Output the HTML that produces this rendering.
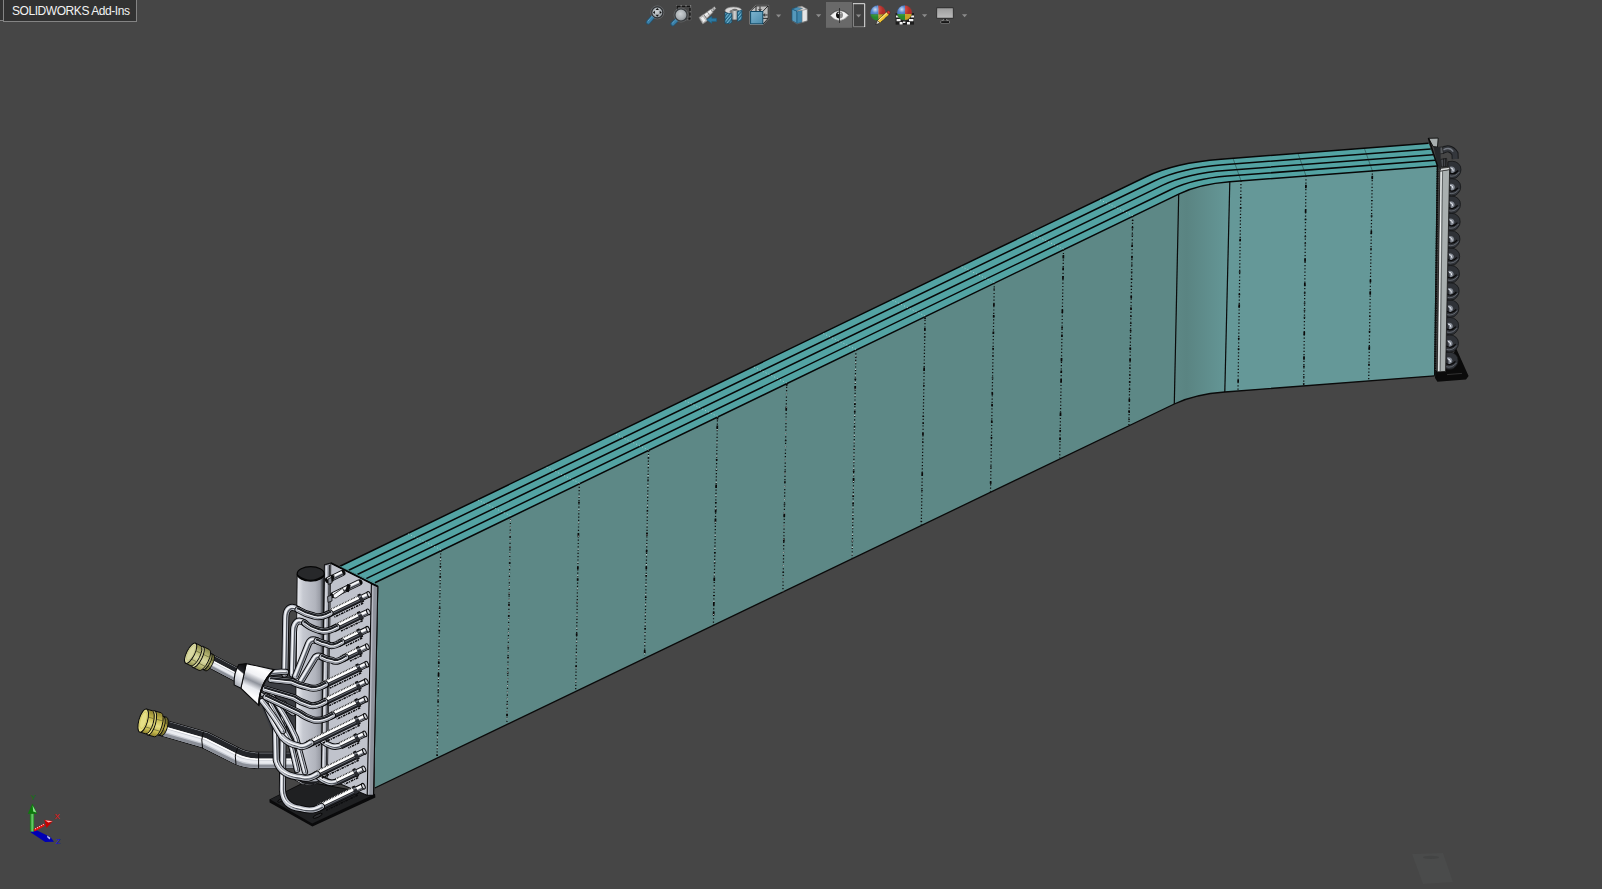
<!DOCTYPE html>
<html lang="en"><head><meta charset="utf-8"><title>SOLIDWORKS</title>
<style>
html,body{margin:0;padding:0;background:#464646;overflow:hidden}
body{width:1602px;height:889px;position:relative;font-family:"Liberation Sans","DejaVu Sans",sans-serif}
#tab{position:absolute;left:3px;top:-1px;width:132px;height:21px;background:#323232;border:1px solid #848484;box-sizing:content-box;color:#f2f2f2;font-size:12px;line-height:22px;white-space:nowrap}
#tab span{position:absolute;left:8px;top:0;letter-spacing:-0.44px}
#lefttab{position:absolute;left:0;top:0;width:3px;height:20px;background:#323232;border-bottom:1px solid #848484}
#scene{position:absolute;left:0;top:0;width:1602px;height:889px}
</style></head><body>
<svg id="scene" width="1602" height="889" viewBox="0 0 1602 889">
<defs>
<linearGradient id="bendg" x1="0" x2="1" y1="0" y2="0"><stop offset="0" stop-color="#5d8886"/><stop offset="0.22" stop-color="#5a8482"/><stop offset="1" stop-color="#659898"/></linearGradient>
</defs>
<path d="M374.9,582.7 L1178.7,194.1 L1174.3,404 L374.8,788 Z" fill="#5d8886"/>
<path d="M1178.7,194.1 Q1199.3,184.1 1229.8,181.8 L1224.8,392 Q1194.4,394.3 1174.3,404 Z" fill="url(#bendg)"/>
<path d="M1229.8,181.8 L1437.4,166 L1434.6,375.8 L1224.8,392 Z" fill="#659898"/>
<path d="M340 566.2 L1146 176.7 Q1174.9 162.7 1221 159.2 L1428.6 143.3 L1437.4 166 L1229.8 181.8 Q1199.3 184.1 1178.7 194.1 L374.9 582.7 Z" fill="#53a3a3"/>
<path d="M340 566.2 L1146 176.7 Q1174.9 162.7 1221 159.2 L1428.6 143.3" fill="none" stroke="#070707" stroke-width="1.5"/>
<path d="M348.7 570.3 L1154.2 181 Q1181 168.1 1223.2 164.8 L1430.8 149" fill="none" stroke="#070707" stroke-width="1.5"/>
<path d="M357.4 574.5 L1162.3 185.4 Q1187.1 173.4 1225.4 170.5 L1433 154.7" fill="none" stroke="#070707" stroke-width="1.5"/>
<path d="M366.2 578.6 L1170.5 189.8 Q1193.2 178.8 1227.6 176.1 L1435.2 160.3" fill="none" stroke="#070707" stroke-width="1.5"/>
<path d="M374.9 582.7 L1178.7 194.1 Q1199.3 184.1 1229.8 181.8 L1437.4 166" fill="none" stroke="#070707" stroke-width="1.5"/>
<path d="M374.8 788 L1174.3 404 Q1194.4 394.3 1224.8 392 L1434.6 375.8" fill="none" stroke="#0a0a0a" stroke-width="1.3"/>
<path d="M1178.7,194.1 L1174.3,404" stroke="#0a0a0a" stroke-width="1.2"/>
<path d="M1229.8,181.8 L1224.8,392" stroke="#0a0a0a" stroke-width="1.2"/>
<path d="M1437.4,166 L1434.6,375.8" stroke="#0a0a0a" stroke-width="1.2"/>
<path d="M340,566.2 L374.9,582.7 L374.9,584.9 L339,568.2 Z" fill="#53a3a3"/>
<path d="M440.7 550.1 L437.1 757" stroke="#0e0e0e" stroke-width="1.25" stroke-dasharray="1.2 2.1" fill="none"/>
<path d="M440.7 550.1 L437.1 757" stroke="#0a0a0a" stroke-width="1.7" stroke-dasharray="3.5 14 1 9 1.5 30 1.5 21 1.5 30 2.5 9" stroke-dashoffset="1.7" fill="none"/>
<path d="M440.7 550.1 L437.1 757" stroke="#e8eaea" stroke-width="1" stroke-dasharray="1 8.9" stroke-dashoffset="0.7" fill="none" opacity="0.8"/>
<path d="M440.7 549.6 l-33.5 -16.2" stroke="#cfe0df" stroke-width="0.9" stroke-dasharray="1 2.2" fill="none" opacity="0.75"/>
<path d="M510.5 516.3 L506.9 724.2" stroke="#0e0e0e" stroke-width="1.25" stroke-dasharray="1.2 2.1" fill="none"/>
<path d="M510.5 516.3 L506.9 724.2" stroke="#0a0a0a" stroke-width="1.7" stroke-dasharray="1.5 30 1 9 1.5 14 1.5 30 1 9 2.5 9" stroke-dashoffset="11.1" fill="none"/>
<path d="M510.5 516.3 L506.9 724.2" stroke="#e8eaea" stroke-width="1" stroke-dasharray="1 5.6" stroke-dashoffset="2.9" fill="none" opacity="0.8"/>
<path d="M510.5 515.8 l-33.5 -16.2" stroke="#cfe0df" stroke-width="0.9" stroke-dasharray="1 2.2" fill="none" opacity="0.75"/>
<path d="M579.3 483.5 L575.7 690.5" stroke="#0e0e0e" stroke-width="1.25" stroke-dasharray="1.2 2.1" fill="none"/>
<path d="M579.3 483.5 L575.7 690.5" stroke="#0a0a0a" stroke-width="1.7" stroke-dasharray="2.5 30 1.5 30 3.5 30 2.5 9 2.5 21 1.5 30" stroke-dashoffset="14.2" fill="none"/>
<path d="M579.3 483.5 L575.7 690.5" stroke="#e8eaea" stroke-width="1" stroke-dasharray="1 12.2" stroke-dashoffset="0.6" fill="none" opacity="0.8"/>
<path d="M579.3 483 l-33.5 -16.2" stroke="#cfe0df" stroke-width="0.9" stroke-dasharray="1 2.2" fill="none" opacity="0.75"/>
<path d="M648.6 450.6 L644.6 655.4" stroke="#0e0e0e" stroke-width="1.25" stroke-dasharray="1.2 2.1" fill="none"/>
<path d="M648.6 450.6 L644.6 655.4" stroke="#0a0a0a" stroke-width="1.7" stroke-dasharray="2.5 6 1 21 1 30 1 21 3.5 14 2.5 14" stroke-dashoffset="1.6" fill="none"/>
<path d="M648.6 450.6 L644.6 655.4" stroke="#e8eaea" stroke-width="1" stroke-dasharray="1 8.9" stroke-dashoffset="5.3" fill="none" opacity="0.8"/>
<path d="M648.6 450.1 l-33.5 -16.2" stroke="#cfe0df" stroke-width="0.9" stroke-dasharray="1 2.2" fill="none" opacity="0.75"/>
<path d="M717.5 416.9 L713.4 625.2" stroke="#0e0e0e" stroke-width="1.25" stroke-dasharray="1.2 2.1" fill="none"/>
<path d="M717.5 416.9 L713.4 625.2" stroke="#0a0a0a" stroke-width="1.7" stroke-dasharray="3.5 6 3.5 30 1.5 9 1 14 3.5 14 1 6" stroke-dashoffset="0.8" fill="none"/>
<path d="M717.5 416.9 L713.4 625.2" stroke="#e8eaea" stroke-width="1" stroke-dasharray="1 12.2" stroke-dashoffset="0.8" fill="none" opacity="0.8"/>
<path d="M717.5 416.4 l-33.5 -16.2" stroke="#cfe0df" stroke-width="0.9" stroke-dasharray="1 2.2" fill="none" opacity="0.75"/>
<path d="M786.7 383.4 L782.9 591.8" stroke="#0e0e0e" stroke-width="1.25" stroke-dasharray="1.2 2.1" fill="none"/>
<path d="M786.7 383.4 L782.9 591.8" stroke="#0a0a0a" stroke-width="1.7" stroke-dasharray="3.5 21 3.5 30 1 30 1 9 1.5 21 1 9" stroke-dashoffset="1.2" fill="none"/>
<path d="M786.7 383.4 L782.9 591.8" stroke="#e8eaea" stroke-width="1" stroke-dasharray="1 12.2" stroke-dashoffset="3.1" fill="none" opacity="0.8"/>
<path d="M786.7 382.9 l-33.5 -16.2" stroke="#cfe0df" stroke-width="0.9" stroke-dasharray="1 2.2" fill="none" opacity="0.75"/>
<path d="M855.9 349.9 L852.1 558.5" stroke="#0e0e0e" stroke-width="1.25" stroke-dasharray="1.2 2.1" fill="none"/>
<path d="M855.9 349.9 L852.1 558.5" stroke="#0a0a0a" stroke-width="1.7" stroke-dasharray="1 21 1 21 1.5 6 3.5 14 1.5 6 1.5 14" stroke-dashoffset="15.4" fill="none"/>
<path d="M855.9 349.9 L852.1 558.5" stroke="#e8eaea" stroke-width="1" stroke-dasharray="1 5.6" stroke-dashoffset="7.4" fill="none" opacity="0.8"/>
<path d="M855.9 349.4 l-33.5 -16.2" stroke="#cfe0df" stroke-width="0.9" stroke-dasharray="1 2.2" fill="none" opacity="0.75"/>
<path d="M925.1 316.5 L921.3 525.1" stroke="#0e0e0e" stroke-width="1.25" stroke-dasharray="1.2 2.1" fill="none"/>
<path d="M925.1 316.5 L921.3 525.1" stroke="#0a0a0a" stroke-width="1.7" stroke-dasharray="1 6 1 9 2.5 6 1 30 3.5 14 1 30" stroke-dashoffset="5.6" fill="none"/>
<path d="M925.1 316 l-33.5 -16.2" stroke="#cfe0df" stroke-width="0.9" stroke-dasharray="1 2.2" fill="none" opacity="0.75"/>
<path d="M994.3 283 L990.5 491.7" stroke="#0e0e0e" stroke-width="1.25" stroke-dasharray="1.2 2.1" fill="none"/>
<path d="M994.3 283 L990.5 491.7" stroke="#0a0a0a" stroke-width="1.7" stroke-dasharray="1 21 1 14 2.5 9 2.5 14 2.5 14 1.5 6" stroke-dashoffset="16.6" fill="none"/>
<path d="M994.3 282.5 l-33.5 -16.2" stroke="#cfe0df" stroke-width="0.9" stroke-dasharray="1 2.2" fill="none" opacity="0.75"/>
<path d="M1063.5 249.6 L1059.7 458.3" stroke="#0e0e0e" stroke-width="1.25" stroke-dasharray="1.2 2.1" fill="none"/>
<path d="M1063.5 249.6 L1059.7 458.3" stroke="#0a0a0a" stroke-width="1.7" stroke-dasharray="2.5 21 3.5 9 2.5 6 3.5 30 3.5 14 1.5 6" stroke-dashoffset="18" fill="none"/>
<path d="M1063.5 249.1 l-33.5 -16.2" stroke="#cfe0df" stroke-width="0.9" stroke-dasharray="1 2.2" fill="none" opacity="0.75"/>
<path d="M1132.7 216.1 L1128.9 424.9" stroke="#0e0e0e" stroke-width="1.25" stroke-dasharray="1.2 2.1" fill="none"/>
<path d="M1132.7 216.1 L1128.9 424.9" stroke="#0a0a0a" stroke-width="1.7" stroke-dasharray="1 6 1 6 1.5 6 1 9 2.5 9 2.5 6" stroke-dashoffset="3.2" fill="none"/>
<path d="M1132.7 215.6 l-33.5 -16.2" stroke="#cfe0df" stroke-width="0.9" stroke-dasharray="1 2.2" fill="none" opacity="0.75"/>
<path d="M1241 180.7 L1238 390.2" stroke="#0e0e0e" stroke-width="1.25" stroke-dasharray="1.2 2.1" fill="none"/>
<path d="M1241 180.7 L1238 390.2" stroke="#0a0a0a" stroke-width="1.7" stroke-dasharray="3.5 30 1.5 9 1.5 30 2.5 30 1.5 21 1.5 9" stroke-dashoffset="17.5" fill="none"/>
<path d="M1306 175.9 L1303.7 385.5" stroke="#0e0e0e" stroke-width="1.25" stroke-dasharray="1.2 2.1" fill="none"/>
<path d="M1306 175.9 L1303.7 385.5" stroke="#0a0a0a" stroke-width="1.7" stroke-dasharray="1 14 3.5 21 3.5 6 1.5 9 1 6 1 6" stroke-dashoffset="6.2" fill="none"/>
<path d="M1372.4 170.2 L1368.7 380.6" stroke="#0e0e0e" stroke-width="1.25" stroke-dasharray="1.2 2.1" fill="none"/>
<path d="M1372.4 170.2 L1368.7 380.6" stroke="#0a0a0a" stroke-width="1.7" stroke-dasharray="2.5 9 3.5 21 1 14 1.5 14 3.5 14 1.5 30" stroke-dashoffset="6" fill="none"/>
<path d="M1241 180.7 l-8 -22.4" stroke="#111" stroke-width="0.8" fill="none" opacity="0.45"/>
<path d="M1306 175.9 l-8 -22.4" stroke="#111" stroke-width="0.8" fill="none" opacity="0.45"/>
<path d="M1372.4 170.9 l-8 -22.4" stroke="#111" stroke-width="0.8" fill="none" opacity="0.45"/>
<path d="M1412 854 L1443 853 L1453 882 L1423 884 Z" fill="#4b4c4c" opacity="0.8"/>
<ellipse cx="1431" cy="857.4" rx="8" ry="1.6" fill="#434444"/>
<path d="M1435.4 371 L1447 368 L1456 348 L1468.6 376 L1466 379.4 L1437.4 381.8 L1435 378 Z" fill="#0b0b0b"/>
<path d="M1447 374.6 L1462 373.4" stroke="#3a3a3a" stroke-width="0.8"/>
<g transform="translate(1450.2 360.2)">
<path d="M-5 -7.6 Q4 -9.6 7.4 -3 Q9.6 4 3 8.6 Q-1 10 -5.4 8.4 Z" fill="#2f3237" stroke="#141517" stroke-width="0.8"/>
<path d="M-3.4 -2.6 Q1.2 -3.8 2.2 0.4 Q2 3.8 -2.4 4.8 Q-0.6 1.4 -3.4 -2.6Z" fill="#7f858f"/>
<path d="M-2.6 -1.4 Q0.4 -1.4 0.2 1.8" stroke="#e6e9ef" stroke-width="1" fill="none"/>
<path d="M-4.4 3.2 Q1 6.4 5.2 1.2" stroke="#0a0a0b" stroke-width="1.2" fill="none"/>
<path d="M-4.6 6.4 Q2 8.4 6.4 2.6" stroke="#9aa0aa" stroke-width="0.6" fill="none" opacity="0.8"/>
</g>
<g transform="translate(1450.5 342.9)">
<path d="M-5 -7.6 Q4 -9.6 7.4 -3 Q9.6 4 3 8.6 Q-1 10 -5.4 8.4 Z" fill="#2f3237" stroke="#141517" stroke-width="0.8"/>
<path d="M-3.4 -2.6 Q1.2 -3.8 2.2 0.4 Q2 3.8 -2.4 4.8 Q-0.6 1.4 -3.4 -2.6Z" fill="#7f858f"/>
<path d="M-2.6 -1.4 Q0.4 -1.4 0.2 1.8" stroke="#e6e9ef" stroke-width="1" fill="none"/>
<path d="M-4.4 3.2 Q1 6.4 5.2 1.2" stroke="#0a0a0b" stroke-width="1.2" fill="none"/>
<path d="M-4.6 6.4 Q2 8.4 6.4 2.6" stroke="#9aa0aa" stroke-width="0.6" fill="none" opacity="0.8"/>
</g>
<g transform="translate(1450.7 325.5)">
<path d="M-5 -7.6 Q4 -9.6 7.4 -3 Q9.6 4 3 8.6 Q-1 10 -5.4 8.4 Z" fill="#2f3237" stroke="#141517" stroke-width="0.8"/>
<path d="M-3.4 -2.6 Q1.2 -3.8 2.2 0.4 Q2 3.8 -2.4 4.8 Q-0.6 1.4 -3.4 -2.6Z" fill="#7f858f"/>
<path d="M-2.6 -1.4 Q0.4 -1.4 0.2 1.8" stroke="#e6e9ef" stroke-width="1" fill="none"/>
<path d="M-4.4 3.2 Q1 6.4 5.2 1.2" stroke="#0a0a0b" stroke-width="1.2" fill="none"/>
<path d="M-4.6 6.4 Q2 8.4 6.4 2.6" stroke="#9aa0aa" stroke-width="0.6" fill="none" opacity="0.8"/>
</g>
<g transform="translate(1451 308.1)">
<path d="M-5 -7.6 Q4 -9.6 7.4 -3 Q9.6 4 3 8.6 Q-1 10 -5.4 8.4 Z" fill="#2f3237" stroke="#141517" stroke-width="0.8"/>
<path d="M-3.4 -2.6 Q1.2 -3.8 2.2 0.4 Q2 3.8 -2.4 4.8 Q-0.6 1.4 -3.4 -2.6Z" fill="#7f858f"/>
<path d="M-2.6 -1.4 Q0.4 -1.4 0.2 1.8" stroke="#e6e9ef" stroke-width="1" fill="none"/>
<path d="M-4.4 3.2 Q1 6.4 5.2 1.2" stroke="#0a0a0b" stroke-width="1.2" fill="none"/>
<path d="M-4.6 6.4 Q2 8.4 6.4 2.6" stroke="#9aa0aa" stroke-width="0.6" fill="none" opacity="0.8"/>
</g>
<g transform="translate(1451.2 290.8)">
<path d="M-5 -7.6 Q4 -9.6 7.4 -3 Q9.6 4 3 8.6 Q-1 10 -5.4 8.4 Z" fill="#2f3237" stroke="#141517" stroke-width="0.8"/>
<path d="M-3.4 -2.6 Q1.2 -3.8 2.2 0.4 Q2 3.8 -2.4 4.8 Q-0.6 1.4 -3.4 -2.6Z" fill="#7f858f"/>
<path d="M-2.6 -1.4 Q0.4 -1.4 0.2 1.8" stroke="#e6e9ef" stroke-width="1" fill="none"/>
<path d="M-4.4 3.2 Q1 6.4 5.2 1.2" stroke="#0a0a0b" stroke-width="1.2" fill="none"/>
<path d="M-4.6 6.4 Q2 8.4 6.4 2.6" stroke="#9aa0aa" stroke-width="0.6" fill="none" opacity="0.8"/>
</g>
<g transform="translate(1451.5 273.5)">
<path d="M-5 -7.6 Q4 -9.6 7.4 -3 Q9.6 4 3 8.6 Q-1 10 -5.4 8.4 Z" fill="#2f3237" stroke="#141517" stroke-width="0.8"/>
<path d="M-3.4 -2.6 Q1.2 -3.8 2.2 0.4 Q2 3.8 -2.4 4.8 Q-0.6 1.4 -3.4 -2.6Z" fill="#7f858f"/>
<path d="M-2.6 -1.4 Q0.4 -1.4 0.2 1.8" stroke="#e6e9ef" stroke-width="1" fill="none"/>
<path d="M-4.4 3.2 Q1 6.4 5.2 1.2" stroke="#0a0a0b" stroke-width="1.2" fill="none"/>
<path d="M-4.6 6.4 Q2 8.4 6.4 2.6" stroke="#9aa0aa" stroke-width="0.6" fill="none" opacity="0.8"/>
</g>
<g transform="translate(1451.7 256.1)">
<path d="M-5 -7.6 Q4 -9.6 7.4 -3 Q9.6 4 3 8.6 Q-1 10 -5.4 8.4 Z" fill="#2f3237" stroke="#141517" stroke-width="0.8"/>
<path d="M-3.4 -2.6 Q1.2 -3.8 2.2 0.4 Q2 3.8 -2.4 4.8 Q-0.6 1.4 -3.4 -2.6Z" fill="#7f858f"/>
<path d="M-2.6 -1.4 Q0.4 -1.4 0.2 1.8" stroke="#e6e9ef" stroke-width="1" fill="none"/>
<path d="M-4.4 3.2 Q1 6.4 5.2 1.2" stroke="#0a0a0b" stroke-width="1.2" fill="none"/>
<path d="M-4.6 6.4 Q2 8.4 6.4 2.6" stroke="#9aa0aa" stroke-width="0.6" fill="none" opacity="0.8"/>
</g>
<g transform="translate(1452 238.8)">
<path d="M-5 -7.6 Q4 -9.6 7.4 -3 Q9.6 4 3 8.6 Q-1 10 -5.4 8.4 Z" fill="#2f3237" stroke="#141517" stroke-width="0.8"/>
<path d="M-3.4 -2.6 Q1.2 -3.8 2.2 0.4 Q2 3.8 -2.4 4.8 Q-0.6 1.4 -3.4 -2.6Z" fill="#7f858f"/>
<path d="M-2.6 -1.4 Q0.4 -1.4 0.2 1.8" stroke="#e6e9ef" stroke-width="1" fill="none"/>
<path d="M-4.4 3.2 Q1 6.4 5.2 1.2" stroke="#0a0a0b" stroke-width="1.2" fill="none"/>
<path d="M-4.6 6.4 Q2 8.4 6.4 2.6" stroke="#9aa0aa" stroke-width="0.6" fill="none" opacity="0.8"/>
</g>
<g transform="translate(1452.2 221.4)">
<path d="M-5 -7.6 Q4 -9.6 7.4 -3 Q9.6 4 3 8.6 Q-1 10 -5.4 8.4 Z" fill="#2f3237" stroke="#141517" stroke-width="0.8"/>
<path d="M-3.4 -2.6 Q1.2 -3.8 2.2 0.4 Q2 3.8 -2.4 4.8 Q-0.6 1.4 -3.4 -2.6Z" fill="#7f858f"/>
<path d="M-2.6 -1.4 Q0.4 -1.4 0.2 1.8" stroke="#e6e9ef" stroke-width="1" fill="none"/>
<path d="M-4.4 3.2 Q1 6.4 5.2 1.2" stroke="#0a0a0b" stroke-width="1.2" fill="none"/>
<path d="M-4.6 6.4 Q2 8.4 6.4 2.6" stroke="#9aa0aa" stroke-width="0.6" fill="none" opacity="0.8"/>
</g>
<g transform="translate(1452.5 204.1)">
<path d="M-5 -7.6 Q4 -9.6 7.4 -3 Q9.6 4 3 8.6 Q-1 10 -5.4 8.4 Z" fill="#2f3237" stroke="#141517" stroke-width="0.8"/>
<path d="M-3.4 -2.6 Q1.2 -3.8 2.2 0.4 Q2 3.8 -2.4 4.8 Q-0.6 1.4 -3.4 -2.6Z" fill="#7f858f"/>
<path d="M-2.6 -1.4 Q0.4 -1.4 0.2 1.8" stroke="#e6e9ef" stroke-width="1" fill="none"/>
<path d="M-4.4 3.2 Q1 6.4 5.2 1.2" stroke="#0a0a0b" stroke-width="1.2" fill="none"/>
<path d="M-4.6 6.4 Q2 8.4 6.4 2.6" stroke="#9aa0aa" stroke-width="0.6" fill="none" opacity="0.8"/>
</g>
<g transform="translate(1452.7 186.7)">
<path d="M-5 -7.6 Q4 -9.6 7.4 -3 Q9.6 4 3 8.6 Q-1 10 -5.4 8.4 Z" fill="#2f3237" stroke="#141517" stroke-width="0.8"/>
<path d="M-3.4 -2.6 Q1.2 -3.8 2.2 0.4 Q2 3.8 -2.4 4.8 Q-0.6 1.4 -3.4 -2.6Z" fill="#7f858f"/>
<path d="M-2.6 -1.4 Q0.4 -1.4 0.2 1.8" stroke="#e6e9ef" stroke-width="1" fill="none"/>
<path d="M-4.4 3.2 Q1 6.4 5.2 1.2" stroke="#0a0a0b" stroke-width="1.2" fill="none"/>
<path d="M-4.6 6.4 Q2 8.4 6.4 2.6" stroke="#9aa0aa" stroke-width="0.6" fill="none" opacity="0.8"/>
</g>
<g transform="translate(1453 169.3)">
<path d="M-5 -7.6 Q4 -9.6 7.4 -3 Q9.6 4 3 8.6 Q-1 10 -5.4 8.4 Z" fill="#2f3237" stroke="#141517" stroke-width="0.8"/>
<path d="M-3.4 -2.6 Q1.2 -3.8 2.2 0.4 Q2 3.8 -2.4 4.8 Q-0.6 1.4 -3.4 -2.6Z" fill="#7f858f"/>
<path d="M-2.6 -1.4 Q0.4 -1.4 0.2 1.8" stroke="#e6e9ef" stroke-width="1" fill="none"/>
<path d="M-4.4 3.2 Q1 6.4 5.2 1.2" stroke="#0a0a0b" stroke-width="1.2" fill="none"/>
<path d="M-4.6 6.4 Q2 8.4 6.4 2.6" stroke="#9aa0aa" stroke-width="0.6" fill="none" opacity="0.8"/>
</g>
<path d="M1441.4 151 Q1450 145.6 1455 153.6 L1455.2 159 " fill="none" stroke="#17181a" stroke-width="7" stroke-linecap="butt"/>
<path d="M1441.4 151 Q1450 145.6 1455 153.6 L1455.2 159" fill="none" stroke="#34373c" stroke-width="5.2"/>
<path d="M1443.4 149.8 Q1450 146.6 1453.2 151.6" fill="none" stroke="#767b84" stroke-width="1.4"/>
<path d="M1437.6 147.6 L1442.4 146.8 L1443 153.4 L1439 154 Z" fill="#8d9298" stroke="#111" stroke-width="0.7"/>
<path d="M1440.6 159.4 L1446.6 158.4 L1447 166.4 L1441.4 167 Z" fill="#4a4d52" stroke="#111" stroke-width="0.7"/>
<path d="M1443.6 158.6 V166.6 M1445.4 158.6 V166.4" stroke="#0c0c0c" stroke-width="0.7"/>
<path d="M1441.2 147 V153.4 M1440 147 V153.6" stroke="#0c0c0c" stroke-width="0.6"/>
<path d="M1439.8 171 L1449.6 169.4 L1445.6 371.4 L1437.2 372 Z" fill="#a9afaf" stroke="#141414" stroke-width="0.8"/>
<path d="M1441.2 171.4 L1438.8 371" stroke="#f4f6f6" stroke-width="1.1"/>
<path d="M1442.6 171.2 L1440.2 371" stroke="#4c5052" stroke-width="0.8"/>
<path d="M1440 168.6 L1449.6 167.2 L1449.6 169.6 L1439.8 171.2 Z" fill="#d9dcdc" stroke="#141414" stroke-width="0.6"/>
<path d="M1437.6 166 L1435 375" stroke="#0c0c0c" stroke-width="2" stroke-dasharray="1.4 1" />
<path d="M1433.6 147 L1440.4 147.6 L1441 171 L1437.8 166.4 Z" fill="#26282b"/>
<path d="M1428.6 138.3 L1438.2 138.1 L1437.5 147 L1433.2 146.6 Z" fill="#a8aeae" stroke="#0c0c0c" stroke-width="0.9"/>
<path d="M1428.4 138 L1437.6 166.2" stroke="#0a0a0a" stroke-width="1.5"/>
<defs>
<linearGradient id="hdr" x1="0" x2="1" y1="0" y2="0"><stop offset="0" stop-color="#7f838b"/><stop offset="0.07" stop-color="#e8eaef"/><stop offset="0.28" stop-color="#c6c9d1"/><stop offset="0.7" stop-color="#b1b4bd"/><stop offset="0.86" stop-color="#9a9da6"/><stop offset="0.93" stop-color="#4f5258"/><stop offset="1" stop-color="#2a2c30"/></linearGradient>
<linearGradient id="cone" x1="0.62" y1="0" x2="0.25" y2="1"><stop offset="0" stop-color="#d9dbe1"/><stop offset="0.12" stop-color="#ffffff"/><stop offset="0.3" stop-color="#f1f2f5"/><stop offset="0.46" stop-color="#8f939c"/><stop offset="0.6" stop-color="#e9ebf0"/><stop offset="0.8" stop-color="#ffffff"/><stop offset="1" stop-color="#b4b8c1"/></linearGradient>
<linearGradient id="collar" x1="0.7" y1="0" x2="0.3" y2="1"><stop offset="0" stop-color="#101012"/><stop offset="0.3" stop-color="#232428"/><stop offset="0.36" stop-color="#ffffff"/><stop offset="0.7" stop-color="#d5d8df"/><stop offset="1" stop-color="#9a9ea7"/></linearGradient>
</defs>
<path d="M269.4 799.4 L306 781 L375 794 L375.4 797.6 L312.4 826.6 L269.6 802.6 Z" fill="#0a0a0b"/>
<path d="M270.4 799.6 L306 782 L374 794.6 L312.2 823.4 Z" fill="#1f2022"/>
<ellipse cx="280.6" cy="800.4" rx="3.2" ry="1.2" transform="rotate(-27 280.6 800.4)" fill="#2d2e31" stroke="#050505" stroke-width="0.8"/>
<ellipse cx="317.6" cy="815.8" rx="5" ry="1.5" transform="rotate(-25 317.6 815.8)" fill="#2d2e31" stroke="#050505" stroke-width="0.8"/>
<path d="M161 727.4 L205 740 L237.4 756.2 Q246 760.4 258.6 760.4 L300 760.4" fill="none" stroke="#0b0b0c" stroke-width="17.1" stroke-linecap="butt" stroke-linejoin="round"/>
<path d="M161 727.4 L205 740 L237.4 756.2 Q246 760.4 258.6 760.4 L300 760.4" fill="none" stroke="#c4c8d0" stroke-width="15.5" stroke-linecap="butt" stroke-linejoin="round"/>
<path d="M161 727.4 L205 740 L237.4 756.2 Q246 760.4 258.6 760.4 L300 760.4" fill="none" stroke="#8b8f98" stroke-width="3.1" transform="translate(-2.2 5.8)" stroke-linecap="butt" stroke-linejoin="round"/>
<path d="M161 727.4 L205 740 L237.4 756.2 Q246 760.4 258.6 760.4 L300 760.4" fill="none" stroke="#232529" stroke-width="5.6" transform="translate(1.6 -4.4)" stroke-linecap="butt" stroke-linejoin="round"/>
<path d="M161 727.4 L205 740 L237.4 756.2 Q246 760.4 258.6 760.4 L300 760.4" fill="none" stroke="#ffffff" stroke-width="1.6" transform="translate(0.4 -1.2)" stroke-linecap="butt" stroke-linejoin="round"/>
<path d="M161 727.4 L205 740 L237.4 756.2 Q246 760.4 258.6 760.4 L300 760.4" fill="none" stroke="#e9ebf0" stroke-width="3.1" transform="translate(-0.7 1.7)" stroke-linecap="butt" stroke-linejoin="round"/>
<path d="M203.4 731.6 Q200.6 740 202.6 748.4" stroke="#0b0b0c" stroke-width="1" fill="none"/>
<path d="M237.6 747.6 Q233.8 756 236 764.6" stroke="#0b0b0c" stroke-width="1" fill="none"/>
<path d="M258.6 752.4 V768.4" stroke="#0b0b0c" stroke-width="1" fill="none"/>
<path d="M324.5 564.8 L330.8 563 L377.8 586.5 L373.5 795.4 L367 795.2 L321.4 776 Z" fill="#c0c3cc" stroke="#0b0b0c" stroke-width="1.1"/>
<path d="M371.4 583.4 L377.8 586.5 L373.5 795.4 L367.2 795.2 Z" fill="#8f939c" stroke="#0b0b0c" stroke-width="1.1"/>
<path d="M372.9 585.8 L368.7 794.6" stroke="#b9bcc5" stroke-width="1.2"/>
<path d="M330.8 563 L377.8 586.5" stroke="#060606" stroke-width="1.9"/>
<path d="M324.5 565 L330.8 563.4 L327.4 777.4 L321.4 776 Z" fill="#aeb1ba" stroke="#0b0b0c" stroke-width="0.8"/>
<path d="M329.4 565 L326.2 776.6" stroke="#2b2d31" stroke-width="1.3"/>
<path d="M326.4 566 L323.2 776" stroke="#dfe1e6" stroke-width="1.2"/>
<path d="M262 670 L284 668 L300 684 L300 712 L286 742 L276 742 L262 708 Z" fill="#3b3d42"/>
<path d="M297.2 574 L324.2 574 L321.2 781 Q308 790 294.8 780 Z" fill="url(#hdr)" stroke="#0b0b0c" stroke-width="0.9"/>
<path d="M296 779 Q308 789.6 321 780.4 Q308 783 296 779Z" fill="#1b1c1f"/>
<ellipse cx="310.7" cy="573.8" rx="13.5" ry="7.2" fill="#27282a" stroke="#060606" stroke-width="1.2"/>
<path d="M297.6 575.6 Q310.6 585.6 324 575.6" stroke="#060606" stroke-width="1.6" fill="none"/>
<path d="M342.4 573 L328 580" fill="none" stroke="#0b0b0c" stroke-width="6.2" stroke-linecap="round"/>
<path d="M342.4 573 L328 580" fill="none" stroke="#b9bcc5" stroke-width="4.6" />
<path d="M342.4 573 L328 580" fill="none" stroke="#ffffff" stroke-width="1.4" transform="translate(-0.4 -1)" />
<path d="M342.4 573 L328 580" fill="none" stroke="#3c3f45" stroke-width="1.4" transform="translate(0.5 1.2)" />
<path d="M333 575.2 L331.4 581.4" stroke="#0b0b0c" stroke-width="3.4"/>
<path d="M328 579 L331.6 577.4 L332 583 L328.2 584.4Z" fill="#8f939b" stroke="#0b0b0c" stroke-width="0.8"/>
<path d="M359.4 582.4 L333.3 595" fill="none" stroke="#0b0b0c" stroke-width="6.2" stroke-linecap="round"/>
<path d="M359.4 582.4 L333.3 595" fill="none" stroke="#b9bcc5" stroke-width="4.6" />
<path d="M359.4 582.4 L333.3 595" fill="none" stroke="#ffffff" stroke-width="1.4" transform="translate(-0.4 -1)" />
<path d="M359.4 582.4 L333.3 595" fill="none" stroke="#3c3f45" stroke-width="1.4" transform="translate(0.5 1.2)" />
<path d="M349 584.6 L347 591.8" stroke="#0b0b0c" stroke-width="3.6"/>
<path d="M333.4 594.6 L342.6 588.2 L344.4 592 L336 598 Q332.6 598.4 333.4 594.6Z" fill="#f4f5f8" stroke="#0b0b0c" stroke-width="0.8"/>
<path d="M327.6 596.6 L331.8 595 L332 601 L328 602.4Z" fill="#8f939b" stroke="#0b0b0c" stroke-width="0.8"/>
<path d="M344.6 743.7 q-7 4.2 -13 2.4 q-5 -1.4 -9 -5" fill="none" stroke="#0a0a0c" stroke-width="6.5" stroke-linecap="round" stroke-linejoin="round"/>
<path d="M344.6 743.7 q-7 4.2 -13 2.4 q-5 -1.4 -9 -5" fill="none" stroke="#bcc0c9" stroke-width="4.6" stroke-linecap="round" stroke-linejoin="round"/>
<path d="M344.6 743.7 q-7 4.2 -13 2.4 q-5 -1.4 -9 -5" fill="none" stroke="#50545c" stroke-width="1.2" transform="translate(1 0.9)" stroke-linecap="round" stroke-linejoin="round"/>
<path d="M344.6 743.7 q-7 4.2 -13 2.4 q-5 -1.4 -9 -5" fill="none" stroke="#f4f5f8" stroke-width="1.4" transform="translate(-0.7 -0.7)" stroke-linecap="round" stroke-linejoin="round"/>
<path d="M340.9 779.9 q-7 4.2 -13 2.4 q-5 -1.4 -9 -5" fill="none" stroke="#0a0a0c" stroke-width="6.5" stroke-linecap="round" stroke-linejoin="round"/>
<path d="M340.9 779.9 q-7 4.2 -13 2.4 q-5 -1.4 -9 -5" fill="none" stroke="#bcc0c9" stroke-width="4.6" stroke-linecap="round" stroke-linejoin="round"/>
<path d="M340.9 779.9 q-7 4.2 -13 2.4 q-5 -1.4 -9 -5" fill="none" stroke="#50545c" stroke-width="1.2" transform="translate(1 0.9)" stroke-linecap="round" stroke-linejoin="round"/>
<path d="M340.9 779.9 q-7 4.2 -13 2.4 q-5 -1.4 -9 -5" fill="none" stroke="#f4f5f8" stroke-width="1.4" transform="translate(-0.7 -0.7)" stroke-linecap="round" stroke-linejoin="round"/>
<path d="M360.8 598.2 L332 612.2" fill="none" stroke="#0c0c0e" stroke-width="1.5" transform="translate(2.4 4.9)" stroke-dasharray="2.6 0.9 1.2 0.8"/>
<path d="M361.7 597.8 L326.6 614.8" fill="none" stroke="#09090a" stroke-width="7.6" stroke-linecap="butt"/>
<path d="M361.7 597.8 L326.6 614.8" fill="none" stroke="#23252a" stroke-width="6.2" stroke-linecap="butt"/>
<path d="M361.7 597.8 L326.6 614.8" fill="none" stroke="#6d7179" stroke-width="0.9" transform="translate(0.6 1.2)" stroke-linecap="butt"/>
<path d="M361.7 597.8 L326.6 614.8" fill="none" stroke="#ffffff" stroke-width="2.5" transform="translate(-0.6 -1.2)" stroke-linecap="butt"/>
<path d="M361.7 597.8 L326.6 614.8" fill="none" stroke="#ffffff" stroke-width="1.5" transform="translate(-1.3 -2.7)" stroke-dasharray="0.85 0.85"/>
<path d="M368.9 594.3 L361.7 597.8" fill="none" stroke="#09090a" stroke-width="6.4" stroke-linecap="butt"/>
<path d="M368.9 594.3 L361.7 597.8" fill="none" stroke="#b9bcc5" stroke-width="4.6" stroke-linecap="butt"/>
<path d="M368.9 594.3 L361.7 597.8" fill="none" stroke="#ffffff" stroke-width="1.8" transform="translate(-0.4 -0.8)" stroke-linecap="butt"/>
<path d="M368.9 594.3 L361.7 597.8" fill="none" stroke="#474a51" stroke-width="1.2" transform="translate(0.7 1.4)" stroke-linecap="butt"/>
<ellipse cx="368.9" cy="594.3" rx="1.5" ry="3" transform="rotate(-26 368.9 594.3)" fill="#cfd2d9" stroke="#09090a" stroke-width="1"/>
<path d="M362.2 597.5 L359.4 598.9" fill="none" stroke="#09090a" stroke-width="9.2" stroke-linecap="butt"/>
<path d="M362.2 597.5 L359.4 598.9" fill="none" stroke="#2a2c31" stroke-width="7" stroke-linecap="butt"/>
<path d="M362.2 597.5 L359.4 598.9" fill="none" stroke="#8b8f98" stroke-width="1.3" transform="translate(-0.8 -1.6)" stroke-linecap="butt"/>
<path d="M360.3 615.7 L338.7 626.1" fill="none" stroke="#0c0c0e" stroke-width="1.5" transform="translate(2.4 4.9)" stroke-dasharray="2.6 0.9 1.2 0.8"/>
<path d="M361.2 615.2 L333.3 628.8" fill="none" stroke="#09090a" stroke-width="7.6" stroke-linecap="butt"/>
<path d="M361.2 615.2 L333.3 628.8" fill="none" stroke="#23252a" stroke-width="6.2" stroke-linecap="butt"/>
<path d="M361.2 615.2 L333.3 628.8" fill="none" stroke="#6d7179" stroke-width="0.9" transform="translate(0.6 1.2)" stroke-linecap="butt"/>
<path d="M361.2 615.2 L333.3 628.8" fill="none" stroke="#ffffff" stroke-width="2.5" transform="translate(-0.6 -1.2)" stroke-linecap="butt"/>
<path d="M361.2 615.2 L333.3 628.8" fill="none" stroke="#ffffff" stroke-width="1.5" transform="translate(-1.3 -2.7)" stroke-dasharray="0.85 0.85"/>
<path d="M368.4 611.8 L361.2 615.2" fill="none" stroke="#09090a" stroke-width="6.4" stroke-linecap="butt"/>
<path d="M368.4 611.8 L361.2 615.2" fill="none" stroke="#b9bcc5" stroke-width="4.6" stroke-linecap="butt"/>
<path d="M368.4 611.8 L361.2 615.2" fill="none" stroke="#ffffff" stroke-width="1.8" transform="translate(-0.4 -0.8)" stroke-linecap="butt"/>
<path d="M368.4 611.8 L361.2 615.2" fill="none" stroke="#474a51" stroke-width="1.2" transform="translate(0.7 1.4)" stroke-linecap="butt"/>
<ellipse cx="368.4" cy="611.8" rx="1.5" ry="3" transform="rotate(-26 368.4 611.8)" fill="#cfd2d9" stroke="#09090a" stroke-width="1"/>
<path d="M361.7 615 L358.9 616.4" fill="none" stroke="#09090a" stroke-width="9.2" stroke-linecap="butt"/>
<path d="M361.7 615 L358.9 616.4" fill="none" stroke="#2a2c31" stroke-width="7" stroke-linecap="butt"/>
<path d="M361.7 615 L358.9 616.4" fill="none" stroke="#8b8f98" stroke-width="1.3" transform="translate(-0.8 -1.6)" stroke-linecap="butt"/>
<path d="M359.8 633.1 L343.6 641" fill="none" stroke="#0c0c0e" stroke-width="1.5" transform="translate(2.4 4.9)" stroke-dasharray="2.6 0.9 1.2 0.8"/>
<path d="M360.7 632.7 L338.2 643.6" fill="none" stroke="#09090a" stroke-width="7.6" stroke-linecap="butt"/>
<path d="M360.7 632.7 L338.2 643.6" fill="none" stroke="#23252a" stroke-width="6.2" stroke-linecap="butt"/>
<path d="M360.7 632.7 L338.2 643.6" fill="none" stroke="#6d7179" stroke-width="0.9" transform="translate(0.6 1.2)" stroke-linecap="butt"/>
<path d="M360.7 632.7 L338.2 643.6" fill="none" stroke="#ffffff" stroke-width="2.5" transform="translate(-0.6 -1.2)" stroke-linecap="butt"/>
<path d="M360.7 632.7 L338.2 643.6" fill="none" stroke="#ffffff" stroke-width="1.5" transform="translate(-1.3 -2.7)" stroke-dasharray="0.85 0.85"/>
<path d="M367.9 629.2 L360.7 632.7" fill="none" stroke="#09090a" stroke-width="6.4" stroke-linecap="butt"/>
<path d="M367.9 629.2 L360.7 632.7" fill="none" stroke="#b9bcc5" stroke-width="4.6" stroke-linecap="butt"/>
<path d="M367.9 629.2 L360.7 632.7" fill="none" stroke="#ffffff" stroke-width="1.8" transform="translate(-0.4 -0.8)" stroke-linecap="butt"/>
<path d="M367.9 629.2 L360.7 632.7" fill="none" stroke="#474a51" stroke-width="1.2" transform="translate(0.7 1.4)" stroke-linecap="butt"/>
<ellipse cx="367.9" cy="629.2" rx="1.5" ry="3" transform="rotate(-26 367.9 629.2)" fill="#cfd2d9" stroke="#09090a" stroke-width="1"/>
<path d="M361.2 632.4 L358.4 633.8" fill="none" stroke="#09090a" stroke-width="9.2" stroke-linecap="butt"/>
<path d="M361.2 632.4 L358.4 633.8" fill="none" stroke="#2a2c31" stroke-width="7" stroke-linecap="butt"/>
<path d="M361.2 632.4 L358.4 633.8" fill="none" stroke="#8b8f98" stroke-width="1.3" transform="translate(-0.8 -1.6)" stroke-linecap="butt"/>
<path d="M359.3 650.6 L347.6 656.2" fill="none" stroke="#0c0c0e" stroke-width="1.5" transform="translate(2.4 4.9)" stroke-dasharray="2.6 0.9 1.2 0.8"/>
<path d="M360.2 650.1 L342.2 658.9" fill="none" stroke="#09090a" stroke-width="7.6" stroke-linecap="butt"/>
<path d="M360.2 650.1 L342.2 658.9" fill="none" stroke="#23252a" stroke-width="6.2" stroke-linecap="butt"/>
<path d="M360.2 650.1 L342.2 658.9" fill="none" stroke="#6d7179" stroke-width="0.9" transform="translate(0.6 1.2)" stroke-linecap="butt"/>
<path d="M360.2 650.1 L342.2 658.9" fill="none" stroke="#ffffff" stroke-width="2.5" transform="translate(-0.6 -1.2)" stroke-linecap="butt"/>
<path d="M360.2 650.1 L342.2 658.9" fill="none" stroke="#ffffff" stroke-width="1.5" transform="translate(-1.3 -2.7)" stroke-dasharray="0.85 0.85"/>
<path d="M367.4 646.6 L360.2 650.1" fill="none" stroke="#09090a" stroke-width="6.4" stroke-linecap="butt"/>
<path d="M367.4 646.6 L360.2 650.1" fill="none" stroke="#b9bcc5" stroke-width="4.6" stroke-linecap="butt"/>
<path d="M367.4 646.6 L360.2 650.1" fill="none" stroke="#ffffff" stroke-width="1.8" transform="translate(-0.4 -0.8)" stroke-linecap="butt"/>
<path d="M367.4 646.6 L360.2 650.1" fill="none" stroke="#474a51" stroke-width="1.2" transform="translate(0.7 1.4)" stroke-linecap="butt"/>
<ellipse cx="367.4" cy="646.6" rx="1.5" ry="3" transform="rotate(-26 367.4 646.6)" fill="#cfd2d9" stroke="#09090a" stroke-width="1"/>
<path d="M360.7 649.9 L357.9 651.3" fill="none" stroke="#09090a" stroke-width="9.2" stroke-linecap="butt"/>
<path d="M360.7 649.9 L357.9 651.3" fill="none" stroke="#2a2c31" stroke-width="7" stroke-linecap="butt"/>
<path d="M360.7 649.9 L357.9 651.3" fill="none" stroke="#8b8f98" stroke-width="1.3" transform="translate(-0.8 -1.6)" stroke-linecap="butt"/>
<path d="M358.8 668 L327.3 683.3" fill="none" stroke="#0c0c0e" stroke-width="1.5" transform="translate(2.4 4.9)" stroke-dasharray="2.6 0.9 1.2 0.8"/>
<path d="M359.7 667.6 L321.9 685.9" fill="none" stroke="#09090a" stroke-width="7.6" stroke-linecap="butt"/>
<path d="M359.7 667.6 L321.9 685.9" fill="none" stroke="#23252a" stroke-width="6.2" stroke-linecap="butt"/>
<path d="M359.7 667.6 L321.9 685.9" fill="none" stroke="#6d7179" stroke-width="0.9" transform="translate(0.6 1.2)" stroke-linecap="butt"/>
<path d="M359.7 667.6 L321.9 685.9" fill="none" stroke="#ffffff" stroke-width="2.5" transform="translate(-0.6 -1.2)" stroke-linecap="butt"/>
<path d="M359.7 667.6 L321.9 685.9" fill="none" stroke="#ffffff" stroke-width="1.5" transform="translate(-1.3 -2.7)" stroke-dasharray="0.85 0.85"/>
<path d="M366.9 664.1 L359.7 667.6" fill="none" stroke="#09090a" stroke-width="6.4" stroke-linecap="butt"/>
<path d="M366.9 664.1 L359.7 667.6" fill="none" stroke="#b9bcc5" stroke-width="4.6" stroke-linecap="butt"/>
<path d="M366.9 664.1 L359.7 667.6" fill="none" stroke="#ffffff" stroke-width="1.8" transform="translate(-0.4 -0.8)" stroke-linecap="butt"/>
<path d="M366.9 664.1 L359.7 667.6" fill="none" stroke="#474a51" stroke-width="1.2" transform="translate(0.7 1.4)" stroke-linecap="butt"/>
<ellipse cx="366.9" cy="664.1" rx="1.5" ry="3" transform="rotate(-26 366.9 664.1)" fill="#cfd2d9" stroke="#09090a" stroke-width="1"/>
<path d="M360.2 667.3 L357.4 668.7" fill="none" stroke="#09090a" stroke-width="9.2" stroke-linecap="butt"/>
<path d="M360.2 667.3 L357.4 668.7" fill="none" stroke="#2a2c31" stroke-width="7" stroke-linecap="butt"/>
<path d="M360.2 667.3 L357.4 668.7" fill="none" stroke="#8b8f98" stroke-width="1.3" transform="translate(-0.8 -1.6)" stroke-linecap="butt"/>
<path d="M358.3 685.5 L326.8 700.7" fill="none" stroke="#0c0c0e" stroke-width="1.5" transform="translate(2.4 4.9)" stroke-dasharray="2.6 0.9 1.2 0.8"/>
<path d="M359.2 685 L321.4 703.3" fill="none" stroke="#09090a" stroke-width="7.6" stroke-linecap="butt"/>
<path d="M359.2 685 L321.4 703.3" fill="none" stroke="#23252a" stroke-width="6.2" stroke-linecap="butt"/>
<path d="M359.2 685 L321.4 703.3" fill="none" stroke="#6d7179" stroke-width="0.9" transform="translate(0.6 1.2)" stroke-linecap="butt"/>
<path d="M359.2 685 L321.4 703.3" fill="none" stroke="#ffffff" stroke-width="2.5" transform="translate(-0.6 -1.2)" stroke-linecap="butt"/>
<path d="M359.2 685 L321.4 703.3" fill="none" stroke="#ffffff" stroke-width="1.5" transform="translate(-1.3 -2.7)" stroke-dasharray="0.85 0.85"/>
<path d="M366.4 681.5 L359.2 685" fill="none" stroke="#09090a" stroke-width="6.4" stroke-linecap="butt"/>
<path d="M366.4 681.5 L359.2 685" fill="none" stroke="#b9bcc5" stroke-width="4.6" stroke-linecap="butt"/>
<path d="M366.4 681.5 L359.2 685" fill="none" stroke="#ffffff" stroke-width="1.8" transform="translate(-0.4 -0.8)" stroke-linecap="butt"/>
<path d="M366.4 681.5 L359.2 685" fill="none" stroke="#474a51" stroke-width="1.2" transform="translate(0.7 1.4)" stroke-linecap="butt"/>
<ellipse cx="366.4" cy="681.5" rx="1.5" ry="3" transform="rotate(-26 366.4 681.5)" fill="#cfd2d9" stroke="#09090a" stroke-width="1"/>
<path d="M359.7 684.8 L356.9 686.2" fill="none" stroke="#09090a" stroke-width="9.2" stroke-linecap="butt"/>
<path d="M359.7 684.8 L356.9 686.2" fill="none" stroke="#2a2c31" stroke-width="7" stroke-linecap="butt"/>
<path d="M359.7 684.8 L356.9 686.2" fill="none" stroke="#8b8f98" stroke-width="1.3" transform="translate(-0.8 -1.6)" stroke-linecap="butt"/>
<path d="M357.8 702.9 L334.4 714.3" fill="none" stroke="#0c0c0e" stroke-width="1.5" transform="translate(2.4 4.9)" stroke-dasharray="2.6 0.9 1.2 0.8"/>
<path d="M358.7 702.5 L329 716.9" fill="none" stroke="#09090a" stroke-width="7.6" stroke-linecap="butt"/>
<path d="M358.7 702.5 L329 716.9" fill="none" stroke="#23252a" stroke-width="6.2" stroke-linecap="butt"/>
<path d="M358.7 702.5 L329 716.9" fill="none" stroke="#6d7179" stroke-width="0.9" transform="translate(0.6 1.2)" stroke-linecap="butt"/>
<path d="M358.7 702.5 L329 716.9" fill="none" stroke="#ffffff" stroke-width="2.5" transform="translate(-0.6 -1.2)" stroke-linecap="butt"/>
<path d="M358.7 702.5 L329 716.9" fill="none" stroke="#ffffff" stroke-width="1.5" transform="translate(-1.3 -2.7)" stroke-dasharray="0.85 0.85"/>
<path d="M365.9 699 L358.7 702.5" fill="none" stroke="#09090a" stroke-width="6.4" stroke-linecap="butt"/>
<path d="M365.9 699 L358.7 702.5" fill="none" stroke="#b9bcc5" stroke-width="4.6" stroke-linecap="butt"/>
<path d="M365.9 699 L358.7 702.5" fill="none" stroke="#ffffff" stroke-width="1.8" transform="translate(-0.4 -0.8)" stroke-linecap="butt"/>
<path d="M365.9 699 L358.7 702.5" fill="none" stroke="#474a51" stroke-width="1.2" transform="translate(0.7 1.4)" stroke-linecap="butt"/>
<ellipse cx="365.9" cy="699" rx="1.5" ry="3" transform="rotate(-26 365.9 699)" fill="#cfd2d9" stroke="#09090a" stroke-width="1"/>
<path d="M359.2 702.2 L356.4 703.6" fill="none" stroke="#09090a" stroke-width="9.2" stroke-linecap="butt"/>
<path d="M359.2 702.2 L356.4 703.6" fill="none" stroke="#2a2c31" stroke-width="7" stroke-linecap="butt"/>
<path d="M359.2 702.2 L356.4 703.6" fill="none" stroke="#8b8f98" stroke-width="1.3" transform="translate(-0.8 -1.6)" stroke-linecap="butt"/>
<path d="M357.3 720.4 L313.2 741.7" fill="none" stroke="#0c0c0e" stroke-width="1.5" transform="translate(2.4 4.9)" stroke-dasharray="2.6 0.9 1.2 0.8"/>
<path d="M358.2 719.9 L307.8 744.4" fill="none" stroke="#09090a" stroke-width="7.6" stroke-linecap="butt"/>
<path d="M358.2 719.9 L307.8 744.4" fill="none" stroke="#23252a" stroke-width="6.2" stroke-linecap="butt"/>
<path d="M358.2 719.9 L307.8 744.4" fill="none" stroke="#6d7179" stroke-width="0.9" transform="translate(0.6 1.2)" stroke-linecap="butt"/>
<path d="M358.2 719.9 L307.8 744.4" fill="none" stroke="#ffffff" stroke-width="2.5" transform="translate(-0.6 -1.2)" stroke-linecap="butt"/>
<path d="M358.2 719.9 L307.8 744.4" fill="none" stroke="#ffffff" stroke-width="1.5" transform="translate(-1.3 -2.7)" stroke-dasharray="0.85 0.85"/>
<path d="M365.4 716.4 L358.2 719.9" fill="none" stroke="#09090a" stroke-width="6.4" stroke-linecap="butt"/>
<path d="M365.4 716.4 L358.2 719.9" fill="none" stroke="#b9bcc5" stroke-width="4.6" stroke-linecap="butt"/>
<path d="M365.4 716.4 L358.2 719.9" fill="none" stroke="#ffffff" stroke-width="1.8" transform="translate(-0.4 -0.8)" stroke-linecap="butt"/>
<path d="M365.4 716.4 L358.2 719.9" fill="none" stroke="#474a51" stroke-width="1.2" transform="translate(0.7 1.4)" stroke-linecap="butt"/>
<ellipse cx="365.4" cy="716.4" rx="1.5" ry="3" transform="rotate(-26 365.4 716.4)" fill="#cfd2d9" stroke="#09090a" stroke-width="1"/>
<path d="M358.7 719.7 L355.9 721.1" fill="none" stroke="#09090a" stroke-width="9.2" stroke-linecap="butt"/>
<path d="M358.7 719.7 L355.9 721.1" fill="none" stroke="#2a2c31" stroke-width="7" stroke-linecap="butt"/>
<path d="M358.7 719.7 L355.9 721.1" fill="none" stroke="#8b8f98" stroke-width="1.3" transform="translate(-0.8 -1.6)" stroke-linecap="butt"/>
<path d="M356.8 737.8 L346 743.1" fill="none" stroke="#0c0c0e" stroke-width="1.5" transform="translate(2.4 4.9)" stroke-dasharray="2.6 0.9 1.2 0.8"/>
<path d="M357.7 737.4 L340.6 745.7" fill="none" stroke="#09090a" stroke-width="7.6" stroke-linecap="butt"/>
<path d="M357.7 737.4 L340.6 745.7" fill="none" stroke="#23252a" stroke-width="6.2" stroke-linecap="butt"/>
<path d="M357.7 737.4 L340.6 745.7" fill="none" stroke="#6d7179" stroke-width="0.9" transform="translate(0.6 1.2)" stroke-linecap="butt"/>
<path d="M357.7 737.4 L340.6 745.7" fill="none" stroke="#ffffff" stroke-width="2.5" transform="translate(-0.6 -1.2)" stroke-linecap="butt"/>
<path d="M357.7 737.4 L340.6 745.7" fill="none" stroke="#ffffff" stroke-width="1.5" transform="translate(-1.3 -2.7)" stroke-dasharray="0.85 0.85"/>
<path d="M364.9 733.9 L357.7 737.4" fill="none" stroke="#09090a" stroke-width="6.4" stroke-linecap="butt"/>
<path d="M364.9 733.9 L357.7 737.4" fill="none" stroke="#b9bcc5" stroke-width="4.6" stroke-linecap="butt"/>
<path d="M364.9 733.9 L357.7 737.4" fill="none" stroke="#ffffff" stroke-width="1.8" transform="translate(-0.4 -0.8)" stroke-linecap="butt"/>
<path d="M364.9 733.9 L357.7 737.4" fill="none" stroke="#474a51" stroke-width="1.2" transform="translate(0.7 1.4)" stroke-linecap="butt"/>
<ellipse cx="364.9" cy="733.9" rx="1.5" ry="3" transform="rotate(-26 364.9 733.9)" fill="#cfd2d9" stroke="#09090a" stroke-width="1"/>
<path d="M358.2 737.1 L355.4 738.5" fill="none" stroke="#09090a" stroke-width="9.2" stroke-linecap="butt"/>
<path d="M358.2 737.1 L355.4 738.5" fill="none" stroke="#2a2c31" stroke-width="7" stroke-linecap="butt"/>
<path d="M358.2 737.1 L355.4 738.5" fill="none" stroke="#8b8f98" stroke-width="1.3" transform="translate(-0.8 -1.6)" stroke-linecap="butt"/>
<path d="M356.3 755.3 L319.4 773.1" fill="none" stroke="#0c0c0e" stroke-width="1.5" transform="translate(2.4 4.9)" stroke-dasharray="2.6 0.9 1.2 0.8"/>
<path d="M357.2 754.8 L314 775.8" fill="none" stroke="#09090a" stroke-width="7.6" stroke-linecap="butt"/>
<path d="M357.2 754.8 L314 775.8" fill="none" stroke="#23252a" stroke-width="6.2" stroke-linecap="butt"/>
<path d="M357.2 754.8 L314 775.8" fill="none" stroke="#6d7179" stroke-width="0.9" transform="translate(0.6 1.2)" stroke-linecap="butt"/>
<path d="M357.2 754.8 L314 775.8" fill="none" stroke="#ffffff" stroke-width="2.5" transform="translate(-0.6 -1.2)" stroke-linecap="butt"/>
<path d="M357.2 754.8 L314 775.8" fill="none" stroke="#ffffff" stroke-width="1.5" transform="translate(-1.3 -2.7)" stroke-dasharray="0.85 0.85"/>
<path d="M364.4 751.3 L357.2 754.8" fill="none" stroke="#09090a" stroke-width="6.4" stroke-linecap="butt"/>
<path d="M364.4 751.3 L357.2 754.8" fill="none" stroke="#b9bcc5" stroke-width="4.6" stroke-linecap="butt"/>
<path d="M364.4 751.3 L357.2 754.8" fill="none" stroke="#ffffff" stroke-width="1.8" transform="translate(-0.4 -0.8)" stroke-linecap="butt"/>
<path d="M364.4 751.3 L357.2 754.8" fill="none" stroke="#474a51" stroke-width="1.2" transform="translate(0.7 1.4)" stroke-linecap="butt"/>
<ellipse cx="364.4" cy="751.3" rx="1.5" ry="3" transform="rotate(-26 364.4 751.3)" fill="#cfd2d9" stroke="#09090a" stroke-width="1"/>
<path d="M357.7 754.6 L354.9 756" fill="none" stroke="#09090a" stroke-width="9.2" stroke-linecap="butt"/>
<path d="M357.7 754.6 L354.9 756" fill="none" stroke="#2a2c31" stroke-width="7" stroke-linecap="butt"/>
<path d="M357.7 754.6 L354.9 756" fill="none" stroke="#8b8f98" stroke-width="1.3" transform="translate(-0.8 -1.6)" stroke-linecap="butt"/>
<path d="M355.8 772.7 L342.3 779.3" fill="none" stroke="#0c0c0e" stroke-width="1.5" transform="translate(2.4 4.9)" stroke-dasharray="2.6 0.9 1.2 0.8"/>
<path d="M356.7 772.3 L336.9 781.9" fill="none" stroke="#09090a" stroke-width="7.6" stroke-linecap="butt"/>
<path d="M356.7 772.3 L336.9 781.9" fill="none" stroke="#23252a" stroke-width="6.2" stroke-linecap="butt"/>
<path d="M356.7 772.3 L336.9 781.9" fill="none" stroke="#6d7179" stroke-width="0.9" transform="translate(0.6 1.2)" stroke-linecap="butt"/>
<path d="M356.7 772.3 L336.9 781.9" fill="none" stroke="#ffffff" stroke-width="2.5" transform="translate(-0.6 -1.2)" stroke-linecap="butt"/>
<path d="M356.7 772.3 L336.9 781.9" fill="none" stroke="#ffffff" stroke-width="1.5" transform="translate(-1.3 -2.7)" stroke-dasharray="0.85 0.85"/>
<path d="M363.9 768.8 L356.7 772.3" fill="none" stroke="#09090a" stroke-width="6.4" stroke-linecap="butt"/>
<path d="M363.9 768.8 L356.7 772.3" fill="none" stroke="#b9bcc5" stroke-width="4.6" stroke-linecap="butt"/>
<path d="M363.9 768.8 L356.7 772.3" fill="none" stroke="#ffffff" stroke-width="1.8" transform="translate(-0.4 -0.8)" stroke-linecap="butt"/>
<path d="M363.9 768.8 L356.7 772.3" fill="none" stroke="#474a51" stroke-width="1.2" transform="translate(0.7 1.4)" stroke-linecap="butt"/>
<ellipse cx="363.9" cy="768.8" rx="1.5" ry="3" transform="rotate(-26 363.9 768.8)" fill="#cfd2d9" stroke="#09090a" stroke-width="1"/>
<path d="M357.2 772 L354.4 773.4" fill="none" stroke="#09090a" stroke-width="9.2" stroke-linecap="butt"/>
<path d="M357.2 772 L354.4 773.4" fill="none" stroke="#2a2c31" stroke-width="7" stroke-linecap="butt"/>
<path d="M357.2 772 L354.4 773.4" fill="none" stroke="#8b8f98" stroke-width="1.3" transform="translate(-0.8 -1.6)" stroke-linecap="butt"/>
<path d="M355.3 790.2 L323.8 805.4" fill="none" stroke="#0c0c0e" stroke-width="1.5" transform="translate(2.4 4.9)" stroke-dasharray="2.6 0.9 1.2 0.8"/>
<path d="M356.2 789.7 L318.4 808" fill="none" stroke="#09090a" stroke-width="7.6" stroke-linecap="butt"/>
<path d="M356.2 789.7 L318.4 808" fill="none" stroke="#23252a" stroke-width="6.2" stroke-linecap="butt"/>
<path d="M356.2 789.7 L318.4 808" fill="none" stroke="#6d7179" stroke-width="0.9" transform="translate(0.6 1.2)" stroke-linecap="butt"/>
<path d="M356.2 789.7 L318.4 808" fill="none" stroke="#ffffff" stroke-width="2.5" transform="translate(-0.6 -1.2)" stroke-linecap="butt"/>
<path d="M356.2 789.7 L318.4 808" fill="none" stroke="#ffffff" stroke-width="1.5" transform="translate(-1.3 -2.7)" stroke-dasharray="0.85 0.85"/>
<path d="M363.4 786.2 L356.2 789.7" fill="none" stroke="#09090a" stroke-width="6.4" stroke-linecap="butt"/>
<path d="M363.4 786.2 L356.2 789.7" fill="none" stroke="#b9bcc5" stroke-width="4.6" stroke-linecap="butt"/>
<path d="M363.4 786.2 L356.2 789.7" fill="none" stroke="#ffffff" stroke-width="1.8" transform="translate(-0.4 -0.8)" stroke-linecap="butt"/>
<path d="M363.4 786.2 L356.2 789.7" fill="none" stroke="#474a51" stroke-width="1.2" transform="translate(0.7 1.4)" stroke-linecap="butt"/>
<ellipse cx="363.4" cy="786.2" rx="1.5" ry="3" transform="rotate(-26 363.4 786.2)" fill="#cfd2d9" stroke="#09090a" stroke-width="1"/>
<path d="M356.7 789.5 L353.9 790.9" fill="none" stroke="#09090a" stroke-width="9.2" stroke-linecap="butt"/>
<path d="M356.7 789.5 L353.9 790.9" fill="none" stroke="#2a2c31" stroke-width="7" stroke-linecap="butt"/>
<path d="M356.7 789.5 L353.9 790.9" fill="none" stroke="#8b8f98" stroke-width="1.3" transform="translate(-0.8 -1.6)" stroke-linecap="butt"/>
<path d="M298 609.6 Q291.4 605 287.6 610 Q285.6 613 285.7 620 L284.8 674" fill="none" stroke="#0a0a0c" stroke-width="7" stroke-linecap="round" stroke-linejoin="round"/>
<path d="M298 609.6 Q291.4 605 287.6 610 Q285.6 613 285.7 620 L284.8 674" fill="none" stroke="#bcc0c9" stroke-width="5.1" stroke-linecap="round" stroke-linejoin="round"/>
<path d="M298 609.6 Q291.4 605 287.6 610 Q285.6 613 285.7 620 L284.8 674" fill="none" stroke="#50545c" stroke-width="1.3" transform="translate(1 0.9)" stroke-linecap="round" stroke-linejoin="round"/>
<path d="M298 609.6 Q291.4 605 287.6 610 Q285.6 613 285.7 620 L284.8 674" fill="none" stroke="#f4f5f8" stroke-width="1.5" transform="translate(-0.7 -0.7)" stroke-linecap="round" stroke-linejoin="round"/>
<path d="M304.6 623 Q298.6 618.6 295.4 623.6 Q293.4 626.6 293.5 632 L292.4 674" fill="none" stroke="#0a0a0c" stroke-width="7" stroke-linecap="round" stroke-linejoin="round"/>
<path d="M304.6 623 Q298.6 618.6 295.4 623.6 Q293.4 626.6 293.5 632 L292.4 674" fill="none" stroke="#bcc0c9" stroke-width="5.1" stroke-linecap="round" stroke-linejoin="round"/>
<path d="M304.6 623 Q298.6 618.6 295.4 623.6 Q293.4 626.6 293.5 632 L292.4 674" fill="none" stroke="#50545c" stroke-width="1.3" transform="translate(1 0.9)" stroke-linecap="round" stroke-linejoin="round"/>
<path d="M304.6 623 Q298.6 618.6 295.4 623.6 Q293.4 626.6 293.5 632 L292.4 674" fill="none" stroke="#f4f5f8" stroke-width="1.5" transform="translate(-0.7 -0.7)" stroke-linecap="round" stroke-linejoin="round"/>
<path d="M317 640.8 Q311 638.2 308.6 643.4 L295.6 676" fill="none" stroke="#0a0a0c" stroke-width="7" stroke-linecap="round" stroke-linejoin="round"/>
<path d="M317 640.8 Q311 638.2 308.6 643.4 L295.6 676" fill="none" stroke="#bcc0c9" stroke-width="5.1" stroke-linecap="round" stroke-linejoin="round"/>
<path d="M317 640.8 Q311 638.2 308.6 643.4 L295.6 676" fill="none" stroke="#50545c" stroke-width="1.3" transform="translate(1 0.9)" stroke-linecap="round" stroke-linejoin="round"/>
<path d="M317 640.8 Q311 638.2 308.6 643.4 L295.6 676" fill="none" stroke="#f4f5f8" stroke-width="1.5" transform="translate(-0.7 -0.7)" stroke-linecap="round" stroke-linejoin="round"/>
<path d="M322 657 Q316.4 654.2 314 659.4 L301 681" fill="none" stroke="#0a0a0c" stroke-width="7" stroke-linecap="round" stroke-linejoin="round"/>
<path d="M322 657 Q316.4 654.2 314 659.4 L301 681" fill="none" stroke="#bcc0c9" stroke-width="5.1" stroke-linecap="round" stroke-linejoin="round"/>
<path d="M322 657 Q316.4 654.2 314 659.4 L301 681" fill="none" stroke="#50545c" stroke-width="1.3" transform="translate(1 0.9)" stroke-linecap="round" stroke-linejoin="round"/>
<path d="M322 657 Q316.4 654.2 314 659.4 L301 681" fill="none" stroke="#f4f5f8" stroke-width="1.5" transform="translate(-0.7 -0.7)" stroke-linecap="round" stroke-linejoin="round"/>
<path d="M321.4 806.5 Q312.4 812.4 300 808.4 Q283.4 806.6 282.4 790 L283.4 704" fill="none" stroke="#0a0a0c" stroke-width="7" stroke-linecap="round" stroke-linejoin="round"/>
<path d="M321.4 806.5 Q312.4 812.4 300 808.4 Q283.4 806.6 282.4 790 L283.4 704" fill="none" stroke="#bcc0c9" stroke-width="5.1" stroke-linecap="round" stroke-linejoin="round"/>
<path d="M321.4 806.5 Q312.4 812.4 300 808.4 Q283.4 806.6 282.4 790 L283.4 704" fill="none" stroke="#50545c" stroke-width="1.3" transform="translate(1 0.9)" stroke-linecap="round" stroke-linejoin="round"/>
<path d="M321.4 806.5 Q312.4 812.4 300 808.4 Q283.4 806.6 282.4 790 L283.4 704" fill="none" stroke="#f4f5f8" stroke-width="1.5" transform="translate(-0.7 -0.7)" stroke-linecap="round" stroke-linejoin="round"/>
<path d="M317 774.3 Q308 780.2 301 777.4 Q280 776 276.2 760 L275.6 730 Q274.6 712 267 704" fill="none" stroke="#0a0a0c" stroke-width="7" stroke-linecap="round" stroke-linejoin="round"/>
<path d="M317 774.3 Q308 780.2 301 777.4 Q280 776 276.2 760 L275.6 730 Q274.6 712 267 704" fill="none" stroke="#bcc0c9" stroke-width="5.1" stroke-linecap="round" stroke-linejoin="round"/>
<path d="M317 774.3 Q308 780.2 301 777.4 Q280 776 276.2 760 L275.6 730 Q274.6 712 267 704" fill="none" stroke="#50545c" stroke-width="1.3" transform="translate(1 0.9)" stroke-linecap="round" stroke-linejoin="round"/>
<path d="M317 774.3 Q308 780.2 301 777.4 Q280 776 276.2 760 L275.6 730 Q274.6 712 267 704" fill="none" stroke="#f4f5f8" stroke-width="1.5" transform="translate(-0.7 -0.7)" stroke-linecap="round" stroke-linejoin="round"/>
<path d="M268 700 Q280 722 290.4 742 L297 770" fill="none" stroke="#0a0a0c" stroke-width="6.3" stroke-linecap="round" stroke-linejoin="round"/>
<path d="M268 700 Q280 722 290.4 742 L297 770" fill="none" stroke="#bcc0c9" stroke-width="4.4" stroke-linecap="round" stroke-linejoin="round"/>
<path d="M268 700 Q280 722 290.4 742 L297 770" fill="none" stroke="#50545c" stroke-width="1.1" transform="translate(1 0.9)" stroke-linecap="round" stroke-linejoin="round"/>
<path d="M268 700 Q280 722 290.4 742 L297 770" fill="none" stroke="#f4f5f8" stroke-width="1.3" transform="translate(-0.7 -0.7)" stroke-linecap="round" stroke-linejoin="round"/>
<path d="M271 695 Q286 716 296 738 L305 772" fill="none" stroke="#0a0a0c" stroke-width="6.3" stroke-linecap="round" stroke-linejoin="round"/>
<path d="M271 695 Q286 716 296 738 L305 772" fill="none" stroke="#bcc0c9" stroke-width="4.4" stroke-linecap="round" stroke-linejoin="round"/>
<path d="M271 695 Q286 716 296 738 L305 772" fill="none" stroke="#50545c" stroke-width="1.1" transform="translate(1 0.9)" stroke-linecap="round" stroke-linejoin="round"/>
<path d="M271 695 Q286 716 296 738 L305 772" fill="none" stroke="#f4f5f8" stroke-width="1.3" transform="translate(-0.7 -0.7)" stroke-linecap="round" stroke-linejoin="round"/>
<path d="M310.8 742.9 Q302.8 748.4 298.2 745.8 Q288 744 282 737 Q273 724 265 703" fill="none" stroke="#0a0a0c" stroke-width="7" stroke-linecap="round" stroke-linejoin="round"/>
<path d="M310.8 742.9 Q302.8 748.4 298.2 745.8 Q288 744 282 737 Q273 724 265 703" fill="none" stroke="#bcc0c9" stroke-width="5.1" stroke-linecap="round" stroke-linejoin="round"/>
<path d="M310.8 742.9 Q302.8 748.4 298.2 745.8 Q288 744 282 737 Q273 724 265 703" fill="none" stroke="#50545c" stroke-width="1.3" transform="translate(1 0.9)" stroke-linecap="round" stroke-linejoin="round"/>
<path d="M310.8 742.9 Q302.8 748.4 298.2 745.8 Q288 744 282 737 Q273 724 265 703" fill="none" stroke="#f4f5f8" stroke-width="1.5" transform="translate(-0.7 -0.7)" stroke-linecap="round" stroke-linejoin="round"/>
<path d="M263 675 Q274 671 286 672" fill="none" stroke="#0a0a0c" stroke-width="6.3" stroke-linecap="round" stroke-linejoin="round"/>
<path d="M263 675 Q274 671 286 672" fill="none" stroke="#bcc0c9" stroke-width="4.4" stroke-linecap="round" stroke-linejoin="round"/>
<path d="M263 675 Q274 671 286 672" fill="none" stroke="#50545c" stroke-width="1.1" transform="translate(1 0.9)" stroke-linecap="round" stroke-linejoin="round"/>
<path d="M263 675 Q274 671 286 672" fill="none" stroke="#f4f5f8" stroke-width="1.3" transform="translate(-0.7 -0.7)" stroke-linecap="round" stroke-linejoin="round"/>
<path d="M261 693 Q276 700 293 713" fill="none" stroke="#0a0a0c" stroke-width="6.3" stroke-linecap="round" stroke-linejoin="round"/>
<path d="M261 693 Q276 700 293 713" fill="none" stroke="#bcc0c9" stroke-width="4.4" stroke-linecap="round" stroke-linejoin="round"/>
<path d="M261 693 Q276 700 293 713" fill="none" stroke="#202226" stroke-width="2" transform="translate(0.1 -0.9)" stroke-linecap="round" stroke-linejoin="round"/>
<path d="M261 693 Q276 700 293 713" fill="none" stroke="#f6f7fa" stroke-width="0.9" transform="translate(0.1 0.4)" stroke-linecap="round" stroke-linejoin="round"/>
<path d="M261 693 Q276 700 293 713" fill="none" stroke="#8d919a" stroke-width="0.9" transform="translate(0.3 1.7)" stroke-linecap="round" stroke-linejoin="round"/>
<path d="M262 701 Q272 713 283 731" fill="none" stroke="#0a0a0c" stroke-width="6.3" stroke-linecap="round" stroke-linejoin="round"/>
<path d="M262 701 Q272 713 283 731" fill="none" stroke="#bcc0c9" stroke-width="4.4" stroke-linecap="round" stroke-linejoin="round"/>
<path d="M262 701 Q272 713 283 731" fill="none" stroke="#50545c" stroke-width="1.1" transform="translate(1 0.9)" stroke-linecap="round" stroke-linejoin="round"/>
<path d="M262 701 Q272 713 283 731" fill="none" stroke="#f4f5f8" stroke-width="1.3" transform="translate(-0.7 -0.7)" stroke-linecap="round" stroke-linejoin="round"/>
<path d="M330 613.1 Q320.6 618.4 314 616 Q305 614 298 609.6" fill="none" stroke="#0a0a0c" stroke-width="7" stroke-linecap="round" stroke-linejoin="round"/>
<path d="M330 613.1 Q320.6 618.4 314 616 Q305 614 298 609.6" fill="none" stroke="#bcc0c9" stroke-width="5.1" stroke-linecap="round" stroke-linejoin="round"/>
<path d="M330 613.1 Q320.6 618.4 314 616 Q305 614 298 609.6" fill="none" stroke="#202226" stroke-width="2.3" transform="translate(0.1 -1.1)" stroke-linecap="round" stroke-linejoin="round"/>
<path d="M330 613.1 Q320.6 618.4 314 616 Q305 614 298 609.6" fill="none" stroke="#f6f7fa" stroke-width="1" transform="translate(0.1 0.5)" stroke-linecap="round" stroke-linejoin="round"/>
<path d="M330 613.1 Q320.6 618.4 314 616 Q305 614 298 609.6" fill="none" stroke="#8d919a" stroke-width="1" transform="translate(0.3 1.9)" stroke-linecap="round" stroke-linejoin="round"/>
<path d="M336.7 627.1 Q326.3 633.2 318.4 630.2 Q310 628 304.6 623" fill="none" stroke="#0a0a0c" stroke-width="7" stroke-linecap="round" stroke-linejoin="round"/>
<path d="M336.7 627.1 Q326.3 633.2 318.4 630.2 Q310 628 304.6 623" fill="none" stroke="#bcc0c9" stroke-width="5.1" stroke-linecap="round" stroke-linejoin="round"/>
<path d="M336.7 627.1 Q326.3 633.2 318.4 630.2 Q310 628 304.6 623" fill="none" stroke="#202226" stroke-width="2.3" transform="translate(0.1 -1.1)" stroke-linecap="round" stroke-linejoin="round"/>
<path d="M336.7 627.1 Q326.3 633.2 318.4 630.2 Q310 628 304.6 623" fill="none" stroke="#f6f7fa" stroke-width="1" transform="translate(0.1 0.5)" stroke-linecap="round" stroke-linejoin="round"/>
<path d="M336.7 627.1 Q326.3 633.2 318.4 630.2 Q310 628 304.6 623" fill="none" stroke="#8d919a" stroke-width="1" transform="translate(0.3 1.9)" stroke-linecap="round" stroke-linejoin="round"/>
<path d="M341.6 641.9 Q332.2 648 327 644.2 Q321 643.2 317 640.8" fill="none" stroke="#0a0a0c" stroke-width="7" stroke-linecap="round" stroke-linejoin="round"/>
<path d="M341.6 641.9 Q332.2 648 327 644.2 Q321 643.2 317 640.8" fill="none" stroke="#bcc0c9" stroke-width="5.1" stroke-linecap="round" stroke-linejoin="round"/>
<path d="M341.6 641.9 Q332.2 648 327 644.2 Q321 643.2 317 640.8" fill="none" stroke="#202226" stroke-width="2.3" transform="translate(0.1 -1.1)" stroke-linecap="round" stroke-linejoin="round"/>
<path d="M341.6 641.9 Q332.2 648 327 644.2 Q321 643.2 317 640.8" fill="none" stroke="#f6f7fa" stroke-width="1" transform="translate(0.1 0.5)" stroke-linecap="round" stroke-linejoin="round"/>
<path d="M341.6 641.9 Q332.2 648 327 644.2 Q321 643.2 317 640.8" fill="none" stroke="#8d919a" stroke-width="1" transform="translate(0.3 1.9)" stroke-linecap="round" stroke-linejoin="round"/>
<path d="M345.6 657.2 Q336.2 663.3 332.6 660.4 Q326.4 659.6 322 657" fill="none" stroke="#0a0a0c" stroke-width="7" stroke-linecap="round" stroke-linejoin="round"/>
<path d="M345.6 657.2 Q336.2 663.3 332.6 660.4 Q326.4 659.6 322 657" fill="none" stroke="#bcc0c9" stroke-width="5.1" stroke-linecap="round" stroke-linejoin="round"/>
<path d="M345.6 657.2 Q336.2 663.3 332.6 660.4 Q326.4 659.6 322 657" fill="none" stroke="#202226" stroke-width="2.3" transform="translate(0.1 -1.1)" stroke-linecap="round" stroke-linejoin="round"/>
<path d="M345.6 657.2 Q336.2 663.3 332.6 660.4 Q326.4 659.6 322 657" fill="none" stroke="#f6f7fa" stroke-width="1" transform="translate(0.1 0.5)" stroke-linecap="round" stroke-linejoin="round"/>
<path d="M345.6 657.2 Q336.2 663.3 332.6 660.4 Q326.4 659.6 322 657" fill="none" stroke="#8d919a" stroke-width="1" transform="translate(0.3 1.9)" stroke-linecap="round" stroke-linejoin="round"/>
<path d="M325.3 684.2 Q314.9 690.5 307.8 687.2 Q298 685 291.6 681.6 L271 679.4" fill="none" stroke="#0a0a0c" stroke-width="7" stroke-linecap="round" stroke-linejoin="round"/>
<path d="M325.3 684.2 Q314.9 690.5 307.8 687.2 Q298 685 291.6 681.6 L271 679.4" fill="none" stroke="#bcc0c9" stroke-width="5.1" stroke-linecap="round" stroke-linejoin="round"/>
<path d="M325.3 684.2 Q314.9 690.5 307.8 687.2 Q298 685 291.6 681.6 L271 679.4" fill="none" stroke="#202226" stroke-width="2.3" transform="translate(0.1 -1.1)" stroke-linecap="round" stroke-linejoin="round"/>
<path d="M325.3 684.2 Q314.9 690.5 307.8 687.2 Q298 685 291.6 681.6 L271 679.4" fill="none" stroke="#f6f7fa" stroke-width="1" transform="translate(0.1 0.5)" stroke-linecap="round" stroke-linejoin="round"/>
<path d="M325.3 684.2 Q314.9 690.5 307.8 687.2 Q298 685 291.6 681.6 L271 679.4" fill="none" stroke="#8d919a" stroke-width="1" transform="translate(0.3 1.9)" stroke-linecap="round" stroke-linejoin="round"/>
<path d="M324.8 701.6 Q314.4 707.9 307.8 704.4 Q300 702 294 697.6 L265 689" fill="none" stroke="#0a0a0c" stroke-width="7" stroke-linecap="round" stroke-linejoin="round"/>
<path d="M324.8 701.6 Q314.4 707.9 307.8 704.4 Q300 702 294 697.6 L265 689" fill="none" stroke="#bcc0c9" stroke-width="5.1" stroke-linecap="round" stroke-linejoin="round"/>
<path d="M324.8 701.6 Q314.4 707.9 307.8 704.4 Q300 702 294 697.6 L265 689" fill="none" stroke="#202226" stroke-width="2.3" transform="translate(0.1 -1.1)" stroke-linecap="round" stroke-linejoin="round"/>
<path d="M324.8 701.6 Q314.4 707.9 307.8 704.4 Q300 702 294 697.6 L265 689" fill="none" stroke="#f6f7fa" stroke-width="1" transform="translate(0.1 0.5)" stroke-linecap="round" stroke-linejoin="round"/>
<path d="M324.8 701.6 Q314.4 707.9 307.8 704.4 Q300 702 294 697.6 L265 689" fill="none" stroke="#8d919a" stroke-width="1" transform="translate(0.3 1.9)" stroke-linecap="round" stroke-linejoin="round"/>
<path d="M332.4 715.2 Q322 721.5 313.6 720 Q305 717.4 299 712.6 L266 697" fill="none" stroke="#0a0a0c" stroke-width="7" stroke-linecap="round" stroke-linejoin="round"/>
<path d="M332.4 715.2 Q322 721.5 313.6 720 Q305 717.4 299 712.6 L266 697" fill="none" stroke="#bcc0c9" stroke-width="5.1" stroke-linecap="round" stroke-linejoin="round"/>
<path d="M332.4 715.2 Q322 721.5 313.6 720 Q305 717.4 299 712.6 L266 697" fill="none" stroke="#202226" stroke-width="2.3" transform="translate(0.1 -1.1)" stroke-linecap="round" stroke-linejoin="round"/>
<path d="M332.4 715.2 Q322 721.5 313.6 720 Q305 717.4 299 712.6 L266 697" fill="none" stroke="#f6f7fa" stroke-width="1" transform="translate(0.1 0.5)" stroke-linecap="round" stroke-linejoin="round"/>
<path d="M332.4 715.2 Q322 721.5 313.6 720 Q305 717.4 299 712.6 L266 697" fill="none" stroke="#8d919a" stroke-width="1" transform="translate(0.3 1.9)" stroke-linecap="round" stroke-linejoin="round"/>
<path d="M207 659.2 L238 675.4" fill="none" stroke="#0b0b0c" stroke-width="14.2" stroke-linecap="butt" stroke-linejoin="round"/>
<path d="M207 659.2 L238 675.4" fill="none" stroke="#c4c8d0" stroke-width="12.6" stroke-linecap="butt" stroke-linejoin="round"/>
<path d="M207 659.2 L238 675.4" fill="none" stroke="#8b8f98" stroke-width="2.5" transform="translate(-2.3 4.5)" stroke-linecap="butt" stroke-linejoin="round"/>
<path d="M207 659.2 L238 675.4" fill="none" stroke="#232529" stroke-width="4.5" transform="translate(1.7 -3.4)" stroke-linecap="butt" stroke-linejoin="round"/>
<path d="M207 659.2 L238 675.4" fill="none" stroke="#ffffff" stroke-width="1.3" transform="translate(0.5 -0.9)" stroke-linecap="butt" stroke-linejoin="round"/>
<path d="M207 659.2 L238 675.4" fill="none" stroke="#e9ebf0" stroke-width="2.5" transform="translate(-0.7 1.4)" stroke-linecap="butt" stroke-linejoin="round"/>
<path d="M246.1 663.6 L274 669.6 Q258.6 684 258.8 705.4 L240.8 688.2 Z" fill="url(#cone)" stroke="#0b0b0c" stroke-width="1.1"/>
<path d="M238.8 664.6 L246.3 663.6 L240.9 688.3 L234.2 685 Q233.4 673 238.8 664.6Z" fill="url(#collar)" stroke="#0b0b0c" stroke-width="1.1"/>
<path d="M274 669.6 Q259.4 684 258.8 705.4" stroke="#0b0b0c" stroke-width="1.6" fill="none"/>
<linearGradient id="ng1" gradientUnits="userSpaceOnUse" x1="211.1" y1="653.4" x2="203" y2="669.5"><stop offset="0" stop-color="#5a5a2c"/><stop offset="0.3" stop-color="#858548"/><stop offset="0.55" stop-color="#bcbc78"/><stop offset="0.8" stop-color="#858548"/><stop offset="1" stop-color="#5a5a2c"/></linearGradient>
<path d="M211.1 653.4 L213.9 654.9 A9 3.2 -63.4 0 1 205.9 670.9 L203 669.5 Z" fill="url(#ng1)" stroke="#0b0b0c" stroke-width="1" stroke-linejoin="round"/>
<path d="M207.7 666.3 L210.6 667.7" stroke="#4d4d26" stroke-width="0.7" opacity="0.8"/>
<path d="M211.1 659.5 L214 660.9" stroke="#4d4d26" stroke-width="0.7" opacity="0.8"/>
<ellipse cx="207.1" cy="661.4" rx="9" ry="3.2" transform="rotate(-63.4 207.1 661.4)" fill="#bcbc78" stroke="#0b0b0c" stroke-width="1"/>
<ellipse cx="207.4" cy="661.6" rx="6.5" ry="2.3" transform="rotate(-63.4 207.1 661.4)" fill="none" stroke="#858548" stroke-width="0.8" opacity="0.7"/>
<linearGradient id="ng2" gradientUnits="userSpaceOnUse" x1="203.1" y1="646.5" x2="192.7" y2="667.3"><stop offset="0" stop-color="#858548"/><stop offset="0.3" stop-color="#bcbc78"/><stop offset="0.55" stop-color="#d9d9a2"/><stop offset="0.8" stop-color="#bcbc78"/><stop offset="1" stop-color="#858548"/></linearGradient>
<path d="M203.1 646.5 L209.4 649.6 A11.6 4.2 -63.4 0 1 199 670.4 L192.7 667.3 Z" fill="url(#ng2)" stroke="#0b0b0c" stroke-width="1" stroke-linejoin="round"/>
<path d="M198.8 663.2 L205 666.3" stroke="#4d4d26" stroke-width="0.7" opacity="0.8"/>
<path d="M203.2 654.3 L209.5 657.4" stroke="#4d4d26" stroke-width="0.7" opacity="0.8"/>
<ellipse cx="197.9" cy="656.9" rx="11.6" ry="4.2" transform="rotate(-63.4 197.9 656.9)" fill="#d9d9a2" stroke="#0b0b0c" stroke-width="1"/>
<ellipse cx="198.3" cy="657.1" rx="8.4" ry="3" transform="rotate(-63.4 197.9 656.9)" fill="none" stroke="#bcbc78" stroke-width="0.8" opacity="0.7"/>
<linearGradient id="ng3" gradientUnits="userSpaceOnUse" x1="195.6" y1="643.2" x2="185.6" y2="663.2"><stop offset="0" stop-color="#858548"/><stop offset="0.3" stop-color="#bcbc78"/><stop offset="0.55" stop-color="#d9d9a2"/><stop offset="0.8" stop-color="#bcbc78"/><stop offset="1" stop-color="#858548"/></linearGradient>
<path d="M195.6 643.2 L201 645.9 A11.2 4 -63.4 0 1 191 665.9 L185.6 663.2 Z" fill="url(#ng3)" stroke="#0b0b0c" stroke-width="1" stroke-linejoin="round"/>
<path d="M191.4 659.2 L196.8 661.9" stroke="#4d4d26" stroke-width="0.7" opacity="0.8"/>
<path d="M195.7 650.7 L201 653.4" stroke="#4d4d26" stroke-width="0.7" opacity="0.8"/>
<ellipse cx="190.6" cy="653.2" rx="11.2" ry="4" transform="rotate(-63.4 190.6 653.2)" fill="#d9d9a2" stroke="#0b0b0c" stroke-width="1"/>
<ellipse cx="191" cy="653.4" rx="8.1" ry="2.9" transform="rotate(-63.4 190.6 653.2)" fill="none" stroke="#bcbc78" stroke-width="0.8" opacity="0.7"/>
<linearGradient id="ng4" gradientUnits="userSpaceOnUse" x1="163.5" y1="716.4" x2="158.2" y2="734.9"><stop offset="0" stop-color="#5a5a2c"/><stop offset="0.3" stop-color="#8a7f2e"/><stop offset="0.55" stop-color="#c6b94e"/><stop offset="0.8" stop-color="#8a7f2e"/><stop offset="1" stop-color="#5a5a2c"/></linearGradient>
<path d="M163.5 716.4 L166.6 717.3 A9.6 3.5 -74 0 1 161.3 735.8 L158.2 734.9 Z" fill="url(#ng4)" stroke="#0b0b0c" stroke-width="1" stroke-linejoin="round"/>
<path d="M162.5 730.6 L165.6 731.5" stroke="#4d4d26" stroke-width="0.7" opacity="0.8"/>
<path d="M164.8 722.8 L167.8 723.7" stroke="#4d4d26" stroke-width="0.7" opacity="0.8"/>
<ellipse cx="160.9" cy="725.7" rx="9.6" ry="3.5" transform="rotate(-74 160.9 725.7)" fill="#c6b94e" stroke="#0b0b0c" stroke-width="1"/>
<ellipse cx="161.3" cy="725.8" rx="6.9" ry="2.5" transform="rotate(-74 160.9 725.7)" fill="none" stroke="#8a7f2e" stroke-width="0.8" opacity="0.7"/>
<linearGradient id="ng5" gradientUnits="userSpaceOnUse" x1="154.5" y1="710.9" x2="147.6" y2="734.9"><stop offset="0" stop-color="#8a7f2e"/><stop offset="0.3" stop-color="#c6b94e"/><stop offset="0.55" stop-color="#e6df86"/><stop offset="0.8" stop-color="#c6b94e"/><stop offset="1" stop-color="#8a7f2e"/></linearGradient>
<path d="M154.5 710.9 L161.3 712.8 A12.5 4.5 -74 0 1 154.4 736.8 L147.6 734.9 Z" fill="url(#ng5)" stroke="#0b0b0c" stroke-width="1" stroke-linejoin="round"/>
<path d="M153.2 729.3 L159.9 731.2" stroke="#4d4d26" stroke-width="0.7" opacity="0.8"/>
<path d="M156.1 719.1 L162.9 721" stroke="#4d4d26" stroke-width="0.7" opacity="0.8"/>
<ellipse cx="151.1" cy="722.9" rx="12.5" ry="4.5" transform="rotate(-74 151.1 722.9)" fill="#e6df86" stroke="#0b0b0c" stroke-width="1"/>
<ellipse cx="151.5" cy="723" rx="9" ry="3.2" transform="rotate(-74 151.1 722.9)" fill="none" stroke="#c6b94e" stroke-width="0.8" opacity="0.7"/>
<linearGradient id="ng6" gradientUnits="userSpaceOnUse" x1="146.5" y1="709.1" x2="139.9" y2="732.1"><stop offset="0" stop-color="#8a7f2e"/><stop offset="0.3" stop-color="#c6b94e"/><stop offset="0.55" stop-color="#e6df86"/><stop offset="0.8" stop-color="#c6b94e"/><stop offset="1" stop-color="#8a7f2e"/></linearGradient>
<path d="M146.5 709.1 L152.3 710.7 A12 4.3 -74 0 1 145.7 733.8 L139.9 732.1 Z" fill="url(#ng6)" stroke="#0b0b0c" stroke-width="1" stroke-linejoin="round"/>
<path d="M145.2 726.8 L151 728.5" stroke="#4d4d26" stroke-width="0.7" opacity="0.8"/>
<path d="M148.1 717 L153.8 718.7" stroke="#4d4d26" stroke-width="0.7" opacity="0.8"/>
<ellipse cx="143.2" cy="720.6" rx="12" ry="4.3" transform="rotate(-74 143.2 720.6)" fill="#e6df86" stroke="#0b0b0c" stroke-width="1"/>
<ellipse cx="143.6" cy="720.7" rx="8.6" ry="3.1" transform="rotate(-74 143.2 720.6)" fill="none" stroke="#c6b94e" stroke-width="0.8" opacity="0.7"/>
<g id="triad" font-family="'Liberation Sans','DejaVu Sans',sans-serif" font-weight="normal">
<defs>
<linearGradient id="gy" x1="0" x2="1" y1="0" y2="0"><stop offset="0" stop-color="#0a6e0a"/><stop offset="0.55" stop-color="#6fd36f"/><stop offset="1" stop-color="#1f8a1f"/></linearGradient>
</defs>
<!-- blue Z arrow -->
<path d="M30.8 829.6 L34 829 L50.4 837 L54 841.8 L45.2 842 L30.8 832.6 Z" fill="#0000b4"/>
<path d="M47 835.4 L50.4 837.8 L49.6 839.4 L47.4 837.6 Z" fill="#b9bdf2"/>
<!-- green Y arrow -->
<rect x="29.9" y="813.6" width="4.2" height="18" fill="url(#gy)"/>
<path d="M32.4 803.6 L37.2 813.8 L27.8 813.8 Z" fill="#0c7a0c"/>
<path d="M32.6 805.4 L36.4 812.6 L33.2 811.4 Z" fill="#8fe38f"/>
<!-- red X arrow -->
<path d="M34 830.4 L44.6 824.6" stroke="#e01010" stroke-width="2.6"/>
<path d="M35 829 L44 824.2" stroke="#ffd0d0" stroke-width="1" stroke-dasharray="1.2 1"/>
<path d="M52.8 821 L44.2 819.8 L46.6 828 Z" fill="#c40000"/>
<path d="M52.6 821.2 L45 820.2 L48.4 822.6 Z" fill="#ffb4b4"/>
<text x="30.6" y="800" font-size="8" fill="#0b7a0b">Y</text>
<text x="54.6" y="819" font-size="8" fill="#ee1111">X</text>
<text x="55.8" y="843.6" font-size="8" fill="#1414d8">Z</text>
</g>

<defs>
<radialGradient id="lens" cx="0.45" cy="0.4" r="0.65"><stop offset="0" stop-color="#cdd2d5"/><stop offset="0.6" stop-color="#aab0b4"/><stop offset="1" stop-color="#7f8589"/></radialGradient>
<linearGradient id="bluesq" x1="0" y1="0" x2="1" y2="1"><stop offset="0" stop-color="#7db4cf"/><stop offset="1" stop-color="#4a8bab"/></linearGradient>
<linearGradient id="cyl" x1="0" x2="1" y1="0" y2="0"><stop offset="0" stop-color="#8e8e8e"/><stop offset="0.5" stop-color="#d6d6d6"/><stop offset="1" stop-color="#8a8a8a"/></linearGradient>
<linearGradient id="mon" x1="0" x2="0" y1="0" y2="1"><stop offset="0" stop-color="#9c9c9c"/><stop offset="1" stop-color="#bdbdbd"/></linearGradient>
<radialGradient id="ballhi" cx="0.32" cy="0.28" r="0.5"><stop offset="0" stop-color="#fff" stop-opacity="0.75"/><stop offset="0.45" stop-color="#fff" stop-opacity="0.12"/><stop offset="1" stop-color="#000" stop-opacity="0.12"/></radialGradient>
<clipPath id="ballc1"><circle cx="878" cy="13" r="7.8"/></clipPath>
<clipPath id="ballc2"><circle cx="904.5" cy="12.7" r="7.5"/></clipPath>
<pattern id="hat" width="2.4" height="2.4" patternUnits="userSpaceOnUse" patternTransform="rotate(-50)"><rect width="2.4" height="2.4" fill="#1d5f80"/><rect width="2.4" height="1.1" fill="#79bcd8"/></pattern>
</defs>
<g id="toolbar">
<!-- zoom to fit -->
<path d="M653.2 16.6 L648 22.4" stroke="#27536e" stroke-width="4.6" stroke-linecap="round"/>
<path d="M653 16.8 L648.2 22.2" stroke="#3a80a9" stroke-width="3" stroke-linecap="round"/>
<path d="M652.4 16.2 L647.4 21.6" stroke="#7cb9da" stroke-width="0.9" stroke-dasharray="1 0.8"/>
<circle cx="657.3" cy="12.4" r="6.5" fill="none" stroke="#8a8f92" stroke-width="0.8" opacity="0.55"/>
<circle cx="657.3" cy="12.4" r="5.5" fill="url(#lens)" stroke="#303336" stroke-width="1.1"/>
<path d="M657.3 8 l1.7 2 h-3.4z M657.3 16.8 l1.7 -2 h-3.4z M652.9 12.4 l2 -1.7 v3.4z M661.7 12.4 l-2 -1.7 v3.4z" fill="#101010"/>
<!-- zoom to area -->
<rect x="676.4" y="5.4" width="14.4" height="14.4" fill="none" stroke="#9a9a9a" stroke-width="0.7" opacity="0.75"/>
<rect x="677.2" y="6.2" width="12.8" height="12.8" fill="none" stroke="#141414" stroke-width="1.4" stroke-dasharray="3.2 1.6"/>
<path d="M677.4 19.4 L672.6 24" stroke="#27536e" stroke-width="4.6" stroke-linecap="round"/>
<path d="M677.2 19.6 L672.8 23.8" stroke="#3a80a9" stroke-width="3" stroke-linecap="round"/>
<path d="M676.6 19 L672.2 23.2" stroke="#7cb9da" stroke-width="0.9" stroke-dasharray="1 0.8"/>
<circle cx="681" cy="15" r="7" fill="none" stroke="#8a8f92" stroke-width="0.8" opacity="0.5"/>
<circle cx="681" cy="15" r="6" fill="url(#lens)" stroke="#3a3e41" stroke-width="1.1"/>
<!-- previous view -->
<path d="M710.4 9.4 L714.6 6.2 L716.2 8.6 L712.4 12.2 Z" fill="#bdbdbd" stroke="#4c4c4c" stroke-width="0.7"/>
<path d="M703.6 14.4 L710.6 9.2 L712.8 12.6 L706.8 18.6 Z" fill="#d6d6d6" stroke="#7a7a7a" stroke-width="0.7"/>
<path d="M699 17.6 L703.6 14.2 L707.6 20.4 L702.8 24 Z" fill="#cfcfcf" stroke="#808080" stroke-width="0.8"/>
<path d="M700.4 18 L703 16.2 L706 20.6 L703.2 22.6 Z" fill="#eeeeee" stroke="#9a9a9a" stroke-width="0.5"/>
<path d="M704.6 14.6 L710.8 10 L711.6 11.2 L705.4 16Z" fill="#f2f2f2"/>
<path d="M707.4 12 L709.8 15.6 M712.6 8 L714.4 10.4" stroke="#6c6c6c" stroke-width="0.7"/>
<path d="M706.6 19.8 L711.8 16.2 L711.8 18.2 L716.6 18.2 L716.6 21.4 L711.8 21.4 L711.8 23.4 Z" fill="#2c7aa4" stroke="#1d5c80" stroke-width="0.6"/>
<!-- section view -->
<ellipse cx="733.5" cy="10.6" rx="8.4" ry="3.6" fill="#d9d9d9" stroke="#8a8a8a" stroke-width="0.7"/>
<ellipse cx="734.6" cy="11.6" rx="5" ry="2" fill="#7a7a7a"/><rect x="732.2" y="9.6" width="5.2" height="10" fill="url(#cyl)"/>
<ellipse cx="734.8" cy="9.8" rx="2.6" ry="1.1" fill="#6d6d6d"/>
<path d="M725 12.4 Q728 13.8 731.8 13.4 L731.8 22.4 Q728 24.4 725 23.2 Z" fill="url(#hat)" stroke="#174e6b" stroke-width="0.8"/>
<path d="M737.4 11.4 Q740 11 741.9 10 L741.9 19.6 Q740 21 737.4 21.2 Z" fill="url(#hat)" stroke="#174e6b" stroke-width="0.8"/>
<!-- view orientation -->
<path d="M750 11 L755.8 5.4 L768.6 5.4 L768.6 18.6 L763 24.4 L750 24.4 Z" fill="#bdbdbd" stroke="#9b9b9b" stroke-width="1"/>
<path d="M750.4 11.2 L756 5.8 M768.2 5.8 L763 11.2 M768.2 18.4 L763 24 M756 5.8 L756 11 M763 18.4 L768.2 18.4" stroke="#1b1b1b" stroke-width="0.9" fill="none"/>
<path d="M756 5.9 H768.2 V18.4" stroke="#1b1b1b" stroke-width="0.9" fill="none"/>
<path d="M760 6.4 V10.6 M758.6 9 L760 10.8 L761.4 9 M767.6 15 H763.6 M765.2 13.6 L763.4 15 L765.2 16.4" stroke="#1b1b1b" stroke-width="0.9" fill="none"/>
<rect x="750.6" y="11.5" width="12.2" height="12.3" fill="url(#bluesq)" stroke="#0e4866" stroke-width="1"/>
<path d="M776 14.4 h5.2 l-2.6 3z" fill="#8c8c8c"/>
<!-- display style cube -->
<path d="M792 9 L797 11.2 L797 23.6 L792 20.6 Z" fill="#5598bb" stroke="#1a587a" stroke-width="0.7"/>
<path d="M797 11.2 L802.2 10.2 L802.2 22.4 L797 23.6 Z" fill="#3f86ac" stroke="#1a587a" stroke-width="0.7"/>
<path d="M802.2 10.2 L807.2 9.2 L807.2 20.8 L802.2 22.4 Z" fill="#e6e6e6" stroke="#9a9a9a" stroke-width="0.5"/>
<path d="M792 9 L797.6 7 L802.8 8.2 L797 11.2 Z" fill="#4a8fb4" stroke="#1a587a" stroke-width="0.6"/>
<path d="M797.6 7 L802 6.2 L807.2 9.2 L802.2 10.2 L797 11.2 L802.8 8.2 Z" fill="#d8d8d8" stroke="#8c8c8c" stroke-width="0.5"/>
<path d="M792 20.8 L797 24 L807.4 21" stroke="#6a6a6a" stroke-width="0.7" fill="none"/>
<path d="M816 14.2 h5.2 l-2.6 3z" fill="#8c8c8c"/>
<!-- hide/show eye -->
<rect x="826" y="2" width="26" height="25.8" fill="#696969"/>
<path d="M830.4 15.6 Q839.5 5.6 848.6 15.2 Q839.5 25.6 830.4 15.6 Z" fill="#f4f4f4" stroke="#8a8a8a" stroke-width="0.6"/>
<path d="M830.2 14.8 Q839.5 5.4 848.8 14.6" fill="none" stroke="#3a3a3a" stroke-width="0.7" opacity="0.8"/>
<path d="M839.5 11.6 A3.5 3.5 0 0 0 839.5 18.6 Z" fill="#101010"/>
<path d="M839.5 11.6 A3.5 3.5 0 0 1 839.5 18.6 Z" fill="#8d8d8d"/>
<circle cx="838.4" cy="13.4" r="0.8" fill="#d8d8d8"/><circle cx="840.8" cy="13.4" r="0.7" fill="#c4c4c4"/>
<path d="M839.5 8 V23" stroke="#2c2c2c" stroke-width="0.9"/>
<!-- dropdown box -->
<rect x="853.4" y="3.6" width="11.2" height="23.2" fill="#404040"/>
<path d="M853.5 3.4 V26.7 H865" stroke="#8c8c8c" stroke-width="0.9" fill="none"/>
<path d="M853 3.7 H864.7 V27" stroke="#f6f6f6" stroke-width="0.9" fill="none"/>
<path d="M856 14.4 h5.2 l-2.6 3z" fill="#8c8c8c"/>
<!-- edit appearance -->
<g clip-path="url(#ballc1)">
<rect x="870" y="5" width="8.4" height="9.4" fill="#3f77c9"/><rect x="878.4" y="5" width="8" height="9.4" fill="#c8342f"/>
<rect x="870" y="14.4" width="8.4" height="7" fill="#2d9a33"/><rect x="878.4" y="14.4" width="8" height="7" fill="#e3b62b"/>
<path d="M877.4 5 Q879.4 10 878.4 14.4 Q879.6 18 878 21.2" stroke="#ffffff" stroke-opacity="0.35" stroke-width="0.6" fill="none"/>
<circle cx="878" cy="13" r="7.8" fill="url(#ballhi)"/>
</g>
<circle cx="878" cy="13" r="7.9" fill="none" stroke="#4a4a4a" stroke-width="0.6" opacity="0.7"/>
<path d="M876 24.6 L877.4 20.4 L886.6 12 L889.2 14.6 L880 23 Z" fill="#f0c232" stroke="#1c1c1c" stroke-width="0.9" stroke-dasharray="1 0.8"/>
<path d="M886.6 12 L888 10.8 Q889.6 10.6 890.2 12.2 L889.2 14.6 Z" fill="#d63a32" stroke="#5b1b18" stroke-width="0.5"/>
<path d="M876 24.6 L877.4 20.4 L880 23 Z" fill="#d9d9d9" stroke="#2a2a2a" stroke-width="0.6"/>
<path d="M878.4 20.6 L887 12.8" stroke="#fff3b0" stroke-width="0.9"/>
<!-- apply scene -->
<rect x="895.6" y="13" width="18.4" height="11.6" fill="#1d1d1d"/>
<path d="M896 15.4 h3 v2 h-3z M911 15.4 h3 v2 h-3z M896.6 19 h4 v2.2 h-4z M909 19 h4.4 v2.2 h-4.4z M899.6 22 h3 v2.4 h-3z M907 22 h3 v2.4 h-3z M903 21.4 h2.4 v1.6 h-2.4z" fill="#f2f2f2"/>
<g clip-path="url(#ballc2)">
<rect x="896" y="5" width="9" height="9" fill="#3f77c9"/><rect x="905" y="5" width="8" height="9" fill="#c8342f"/>
<rect x="896" y="14" width="9" height="7" fill="#2d9a33"/><rect x="905" y="14" width="8" height="7" fill="#e3b62b"/>
<circle cx="904.5" cy="12.7" r="7.5" fill="url(#ballhi)"/>
</g>
<circle cx="904.5" cy="12.7" r="7.6" fill="none" stroke="#4a4a4a" stroke-width="0.6" opacity="0.7"/>
<path d="M922 14.2 h5.2 l-2.6 3z" fill="#8c8c8c"/>
<!-- monitor -->
<rect x="936.6" y="7.6" width="16.8" height="10.8" rx="0.8" fill="url(#mon)" stroke="#353535" stroke-width="1.1"/>
<rect x="944.2" y="18.8" width="1.9" height="2.4" fill="#1c1c1c"/>
<rect x="940.4" y="20.6" width="9.4" height="2.9" rx="1.2" fill="#9a9a9a" opacity="0.75"/><rect x="941.2" y="21.2" width="7.8" height="1.7" fill="#0a0a0a"/>
<path d="M942.6 20.6 L944 19.2 M947.8 20.6 L946.4 19.2" stroke="#bdbdbd" stroke-width="0.7"/>
<path d="M962 14.2 h5.2 l-2.6 3z" fill="#8c8c8c"/>
</g>

</svg>
<div id="lefttab"></div>
<div id="tab"><span>SOLIDWORKS Add-Ins</span></div>
</body></html>
